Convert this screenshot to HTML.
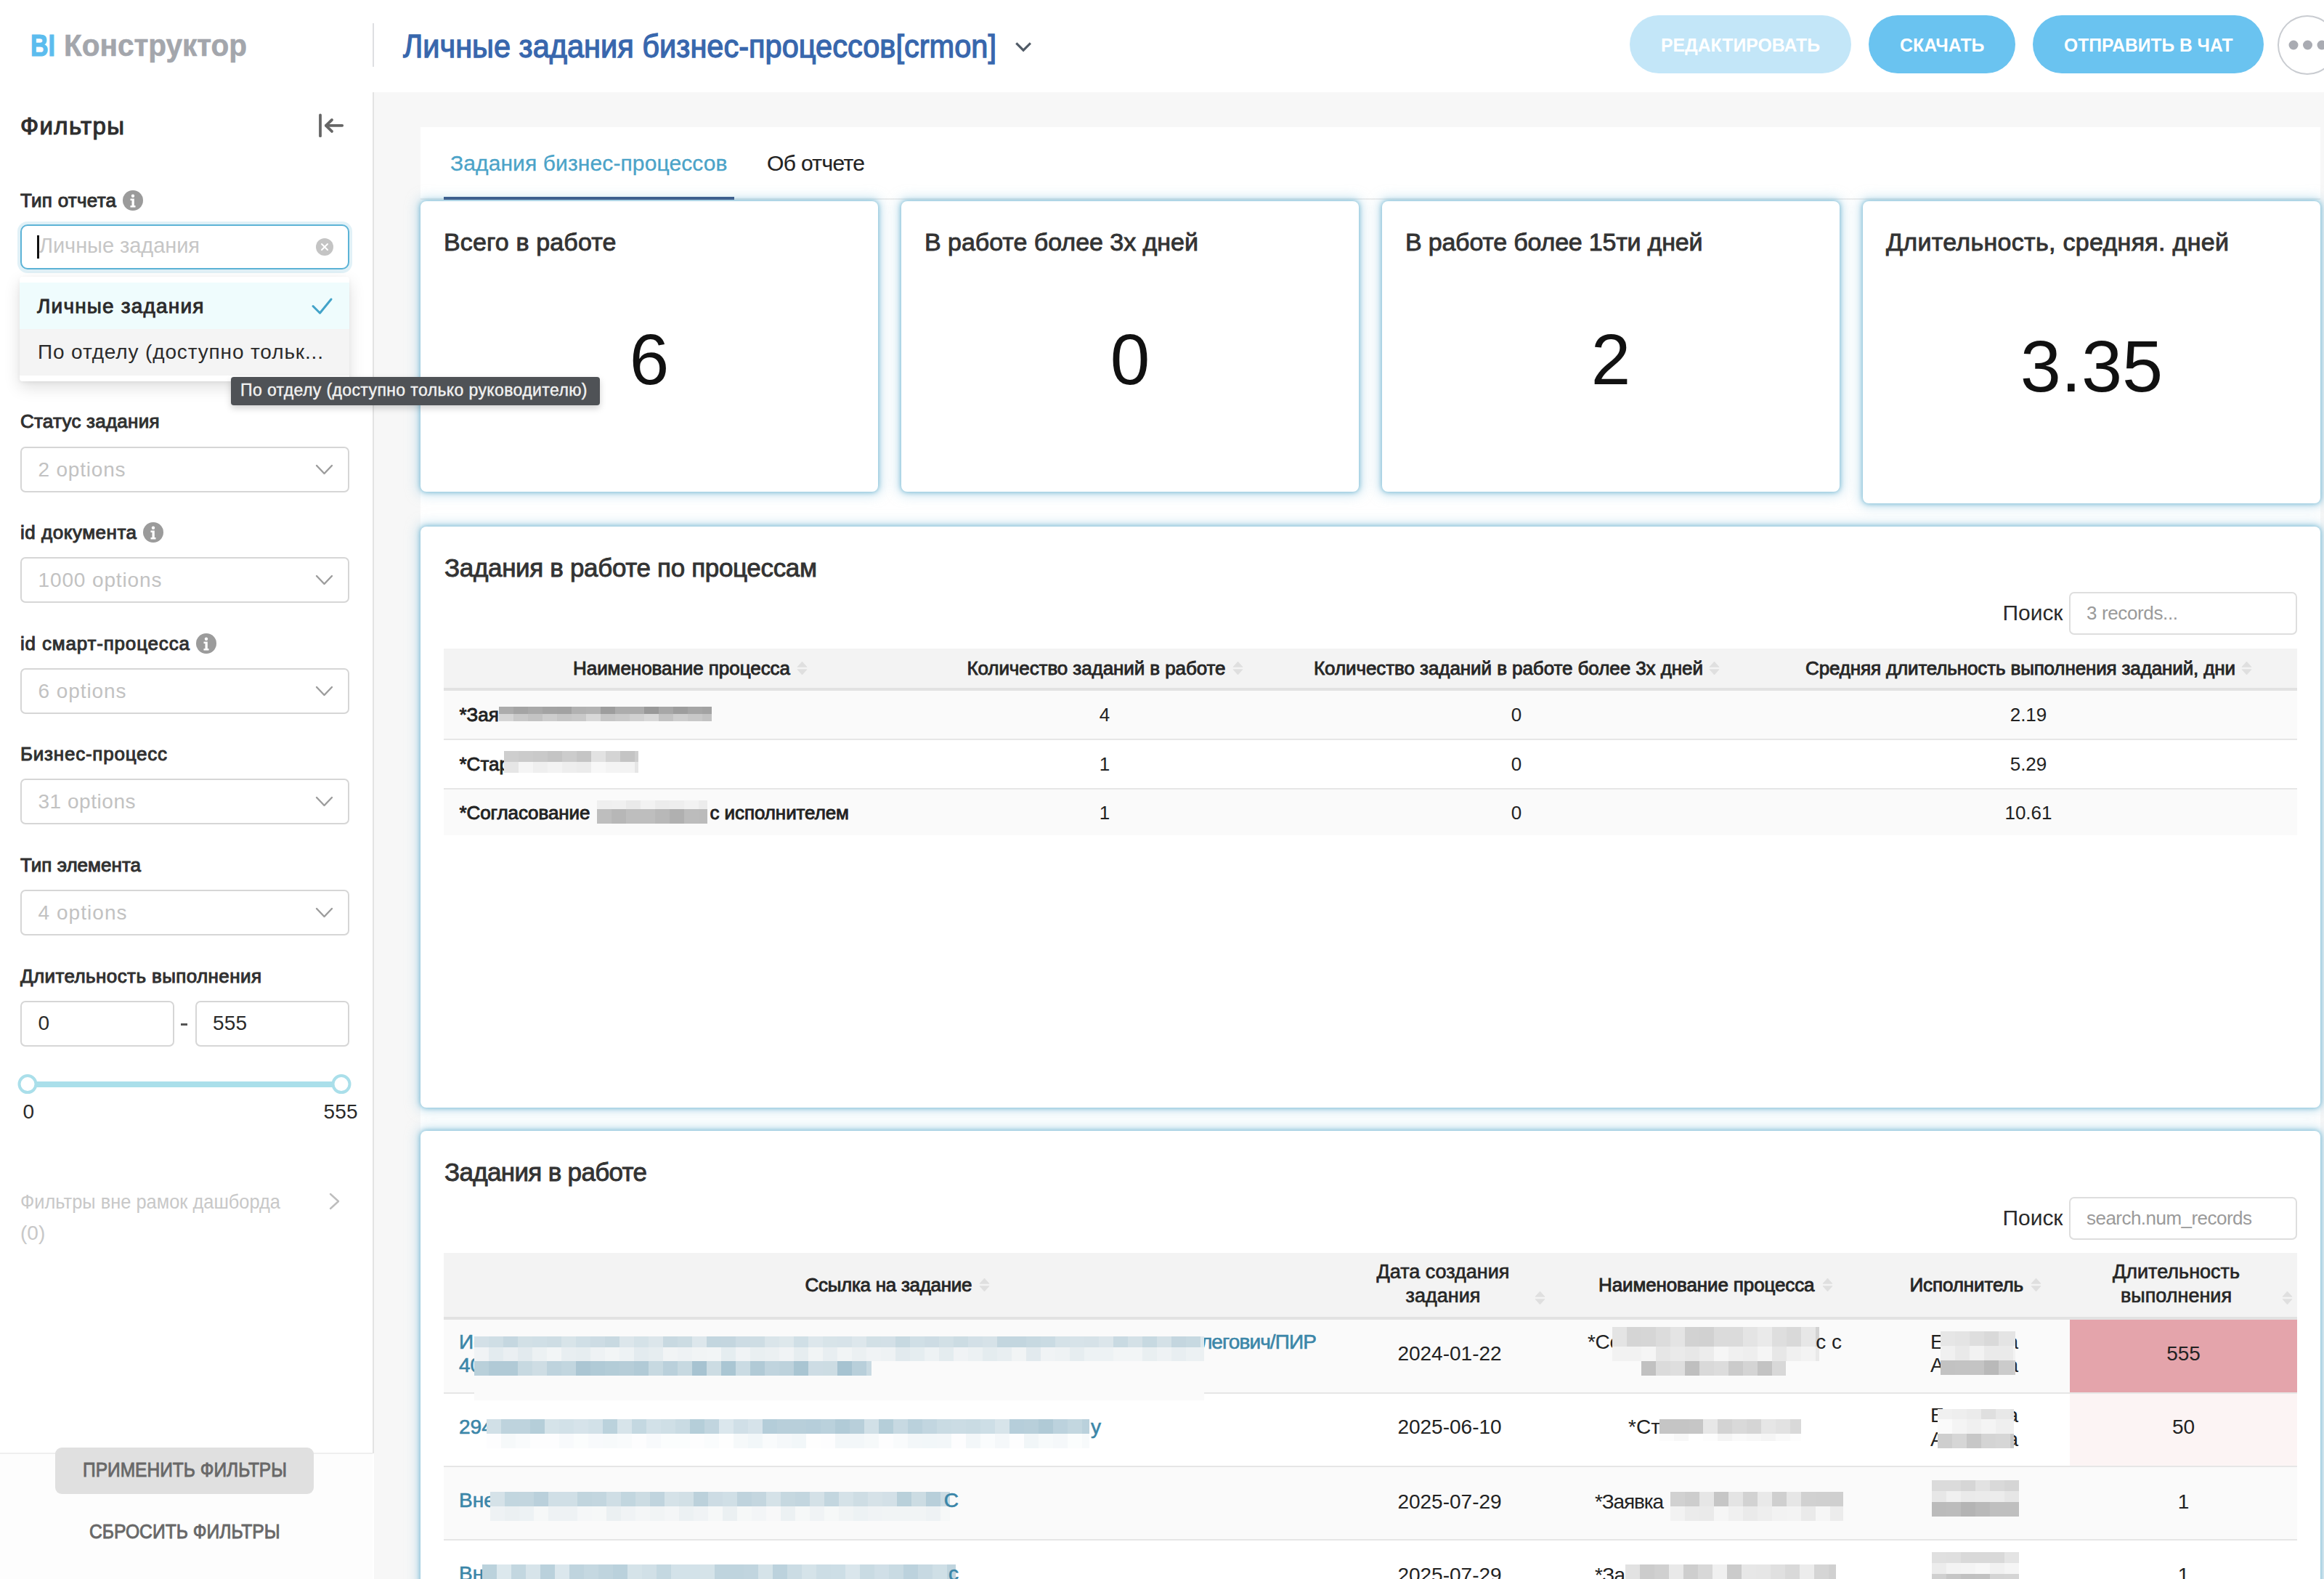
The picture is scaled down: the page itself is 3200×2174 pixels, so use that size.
<!DOCTYPE html>
<html><head><meta charset="utf-8"><style>
html,body{margin:0;padding:0;}
body{width:3200px;height:2174px;overflow:hidden;position:relative;background:#fff;font-family:'Liberation Sans', sans-serif;}
@media (max-width: 2000px) { html { zoom: 0.5; } }
.card{position:absolute;background:#fff;border-radius:8px;box-shadow:0 0 6px 1px rgba(120,185,212,0.9),0 0 16px 5px rgba(165,210,230,0.55);}
</style></head><body>
<div style="position:absolute;left:515px;top:127px;width:2685px;height:2047px;background:#f7f7f7;"></div>
<div style="position:absolute;left:579px;top:175px;width:2616px;height:1999px;background:#ffffff;"></div>
<div style="position:absolute;left:0px;top:127px;width:513px;height:1874px;background:#ffffff;"></div>
<div style="position:absolute;left:0px;top:2001px;width:513px;height:173px;background:#fdfdfd;"></div>
<div style="position:absolute;left:0px;top:2000px;width:513px;height:2px;background:#efefef;"></div>
<div style="position:absolute;left:513px;top:127px;width:2px;height:1874px;background:#e3e3e3;"></div>
<div style="position:absolute;top:42px;font-size:42px;line-height:42px;font-weight:700;color:#5cbcee;white-space:nowrap;transform:scaleX(0.8095);transform-origin:0 0;left:42px;-webkit-text-stroke:1.2px #5cbcee;"><span id="t1">BI</span></div>
<div style="position:absolute;top:42px;font-size:42px;line-height:42px;font-weight:700;color:#a3a6ac;white-space:nowrap;transform:scaleX(0.9640);transform-origin:0 0;left:88px;-webkit-text-stroke:0.6px #a3a6ac;"><span id="t2">Конструктор</span></div>
<div style="position:absolute;left:513px;top:32px;width:2px;height:60px;background:#dedfe2;"></div>
<div style="position:absolute;top:42px;font-size:44px;line-height:44px;font-weight:400;-webkit-text-stroke:1.3px #3867ad;color:#3867ad;white-space:nowrap;transform:scaleX(0.9444);transform-origin:0 0;left:555px;"><span id="t3">Личные задания бизнес-процессов[crmon]</span></div>
<svg style="position:absolute;left:1395px;top:54px" width="28" height="22" viewBox="0 0 28 22"><polyline points="4.3,5.4 14.1,15.2 23.9,5.4" fill="none" stroke="#505a66" stroke-width="3.1" stroke-linecap="butt" stroke-linejoin="miter"/></svg>
<div style="position:absolute;left:2243.5px;top:21px;width:305.0px;height:80px;background:#c3e6f8;border-radius:40px;"></div>
<div style="position:absolute;top:49.5px;font-size:25px;line-height:25px;font-weight:700;color:#ffffff;white-space:nowrap;transform:scaleX(0.9910);transform-origin:0 0;left:2287px;"><span id="t4">РЕДАКТИРОВАТЬ</span></div>
<div style="position:absolute;left:2573px;top:21px;width:202px;height:80px;background:#6ac3f0;border-radius:40px;"></div>
<div style="position:absolute;top:49.5px;font-size:25px;line-height:25px;font-weight:700;color:#ffffff;white-space:nowrap;transform:scaleX(0.9951);transform-origin:0 0;left:2615.5px;"><span id="t5">СКАЧАТЬ</span></div>
<div style="position:absolute;left:2799px;top:21px;width:318px;height:80px;background:#6ac3f0;border-radius:40px;"></div>
<div style="position:absolute;top:49.5px;font-size:25px;line-height:25px;font-weight:700;color:#ffffff;white-space:nowrap;transform:scaleX(0.9848);transform-origin:0 0;left:2841.5px;"><span id="t6">ОТПРАВИТЬ В ЧАТ</span></div>
<div style="position:absolute;left:3136.3px;top:21px;width:82.0px;height:81.5px;background:#fff;box-sizing:border-box;border:2px solid #c9ccd1;border-radius:50%;"></div>
<svg style="position:absolute;left:3145px;top:52px" width="55" height="20" viewBox="0 0 55 20"><circle cx="13" cy="10" r="6.5" fill="#a9abb2"/><circle cx="32.5" cy="10" r="6.5" fill="#a9abb2"/><circle cx="52" cy="10" r="6.5" fill="#a9abb2"/></svg>
<div style="position:absolute;top:157px;font-size:33px;line-height:33px;font-weight:400;-webkit-text-stroke:1.1px #2e2e2e;color:#2e2e2e;white-space:nowrap;letter-spacing:1.404px;left:28px;"><span id="t7">Фильтры</span></div>
<svg style="position:absolute;left:432px;top:150px" width="48" height="46" viewBox="0 0 48 46"><line x1="9" y1="8.4" x2="9" y2="37.2" stroke="#666" stroke-width="3.8" stroke-linecap="round"/><line x1="17" y1="22.8" x2="39.2" y2="22.8" stroke="#666" stroke-width="3.8" stroke-linecap="round"/><polyline points="25,15 16.8,22.8 25,30.9" fill="none" stroke="#666" stroke-width="3.8" stroke-linecap="round" stroke-linejoin="round"/></svg>
<div style="position:absolute;top:262.5px;font-size:26px;line-height:26px;font-weight:400;-webkit-text-stroke:1.0px #303030;color:#303030;white-space:nowrap;letter-spacing:0.267px;left:28px;"><span id="t8">Тип отчета</span></div>
<svg style="position:absolute;left:169px;top:261.5px" width="28" height="28" viewBox="0 0 28 28"><circle cx="14" cy="14" r="14" fill="#9b9b9b"/><circle cx="14" cy="7.7" r="2.2" fill="#fff"/><path d="M10.5 11.5 H15.8 V21 H17.5 V23.5 H10.5 V21 H12.5 V14 H10.5 Z" fill="#fff"/></svg>
<div style="position:absolute;left:23.5px;top:304.5px;width:461.0px;height:71.0px;background:rgba(120,190,220,0.22);border-radius:14px;"></div>
<div style="position:absolute;left:27.5px;top:309px;width:453.0px;height:62px;background:#fff;box-sizing:border-box;border:2.5px solid #5cb3d6;border-radius:10px;"></div>
<div style="position:absolute;left:51px;top:324px;width:2.5px;height:32px;background:#111;"></div>
<div style="position:absolute;top:324px;font-size:29px;line-height:29px;font-weight:400;color:#c6c6c6;white-space:nowrap;letter-spacing:-0.060px;left:54px;"><span id="t9">Личные задания</span></div>
<svg style="position:absolute;left:435px;top:328px" width="24" height="24" viewBox="0 0 24 24"><circle cx="12" cy="12" r="12" fill="#c4c4c4"/><path d="M8 8 L16 16 M16 8 L8 16" stroke="#fff" stroke-width="2" stroke-linecap="round"/></svg>
<div style="position:absolute;top:567px;font-size:26px;line-height:26px;font-weight:400;-webkit-text-stroke:1.0px #303030;color:#303030;white-space:nowrap;letter-spacing:0.239px;left:28px;"><span id="t10">Статус задания</span></div>
<div style="position:absolute;left:27.5px;top:614.5px;width:453.0px;height:63.0px;background:#fff;box-sizing:border-box;border:2px solid #d6d6d6;border-radius:7px;"></div>
<div style="position:absolute;top:632.5px;font-size:28px;line-height:28px;font-weight:400;color:#c2c2c2;white-space:nowrap;letter-spacing:0.795px;left:52.5px;"><span id="t11">2 options</span></div>
<svg style="position:absolute;left:430px;top:636.5px" width="34" height="20" viewBox="0 0 34 20"><polyline points="6,4 16.5,15 27,4" fill="none" stroke="#9c9c9c" stroke-width="2.4" stroke-linecap="round" stroke-linejoin="round"/></svg>
<div style="position:absolute;top:720px;font-size:26px;line-height:26px;font-weight:400;-webkit-text-stroke:1.0px #303030;color:#303030;white-space:nowrap;letter-spacing:0.523px;left:28px;"><span id="t12">id документа</span></div>
<svg style="position:absolute;left:197px;top:718.5px" width="28" height="28" viewBox="0 0 28 28"><circle cx="14" cy="14" r="14" fill="#9b9b9b"/><circle cx="14" cy="7.7" r="2.2" fill="#fff"/><path d="M10.5 11.5 H15.8 V21 H17.5 V23.5 H10.5 V21 H12.5 V14 H10.5 Z" fill="#fff"/></svg>
<div style="position:absolute;left:27.5px;top:767px;width:453.0px;height:63px;background:#fff;box-sizing:border-box;border:2px solid #d6d6d6;border-radius:7px;"></div>
<div style="position:absolute;top:785px;font-size:28px;line-height:28px;font-weight:400;color:#c2c2c2;white-space:nowrap;letter-spacing:0.876px;left:52.5px;"><span id="t13">1000 options</span></div>
<svg style="position:absolute;left:430px;top:789px" width="34" height="20" viewBox="0 0 34 20"><polyline points="6,4 16.5,15 27,4" fill="none" stroke="#9c9c9c" stroke-width="2.4" stroke-linecap="round" stroke-linejoin="round"/></svg>
<div style="position:absolute;top:872.5px;font-size:26px;line-height:26px;font-weight:400;-webkit-text-stroke:1.0px #303030;color:#303030;white-space:nowrap;letter-spacing:0.826px;left:28px;"><span id="t14">id смарт-процесса</span></div>
<svg style="position:absolute;left:269.5px;top:871.5px" width="28" height="28" viewBox="0 0 28 28"><circle cx="14" cy="14" r="14" fill="#9b9b9b"/><circle cx="14" cy="7.7" r="2.2" fill="#fff"/><path d="M10.5 11.5 H15.8 V21 H17.5 V23.5 H10.5 V21 H12.5 V14 H10.5 Z" fill="#fff"/></svg>
<div style="position:absolute;left:27.5px;top:919.5px;width:453.0px;height:63.0px;background:#fff;box-sizing:border-box;border:2px solid #d6d6d6;border-radius:7px;"></div>
<div style="position:absolute;top:937.5px;font-size:28px;line-height:28px;font-weight:400;color:#c2c2c2;white-space:nowrap;letter-spacing:0.920px;left:52.5px;"><span id="t15">6 options</span></div>
<svg style="position:absolute;left:430px;top:941.5px" width="34" height="20" viewBox="0 0 34 20"><polyline points="6,4 16.5,15 27,4" fill="none" stroke="#9c9c9c" stroke-width="2.4" stroke-linecap="round" stroke-linejoin="round"/></svg>
<div style="position:absolute;top:1025px;font-size:26px;line-height:26px;font-weight:400;-webkit-text-stroke:1.0px #303030;color:#303030;white-space:nowrap;letter-spacing:0.766px;left:28px;"><span id="t16">Бизнес-процесс</span></div>
<div style="position:absolute;left:27.5px;top:1072px;width:453.0px;height:63px;background:#fff;box-sizing:border-box;border:2px solid #d6d6d6;border-radius:7px;"></div>
<div style="position:absolute;top:1090px;font-size:28px;line-height:28px;font-weight:400;color:#c2c2c2;white-space:nowrap;letter-spacing:0.531px;left:52.5px;"><span id="t17">31 options</span></div>
<svg style="position:absolute;left:430px;top:1094px" width="34" height="20" viewBox="0 0 34 20"><polyline points="6,4 16.5,15 27,4" fill="none" stroke="#9c9c9c" stroke-width="2.4" stroke-linecap="round" stroke-linejoin="round"/></svg>
<div style="position:absolute;top:1177.5px;font-size:26px;line-height:26px;font-weight:400;-webkit-text-stroke:1.0px #303030;color:#303030;white-space:nowrap;letter-spacing:0.030px;left:28px;"><span id="t18">Тип элемента</span></div>
<div style="position:absolute;left:27.5px;top:1224.5px;width:453.0px;height:63.0px;background:#fff;box-sizing:border-box;border:2px solid #d6d6d6;border-radius:7px;"></div>
<div style="position:absolute;top:1242.5px;font-size:28px;line-height:28px;font-weight:400;color:#c2c2c2;white-space:nowrap;letter-spacing:1.045px;left:52.5px;"><span id="t19">4 options</span></div>
<svg style="position:absolute;left:430px;top:1246.5px" width="34" height="20" viewBox="0 0 34 20"><polyline points="6,4 16.5,15 27,4" fill="none" stroke="#9c9c9c" stroke-width="2.4" stroke-linecap="round" stroke-linejoin="round"/></svg>
<div style="position:absolute;top:1330.5px;font-size:26px;line-height:26px;font-weight:400;-webkit-text-stroke:1.0px #303030;color:#303030;white-space:nowrap;letter-spacing:0.402px;left:28px;"><span id="t20">Длительность выполнения</span></div>
<div style="position:absolute;left:27.5px;top:1377.5px;width:212.0px;height:63.0px;background:#fff;box-sizing:border-box;border:2px solid #d6d6d6;border-radius:7px;"></div>
<div style="position:absolute;left:268.5px;top:1377.5px;width:212.0px;height:63.0px;background:#fff;box-sizing:border-box;border:2px solid #d6d6d6;border-radius:7px;"></div>
<div style="position:absolute;top:1395px;font-size:28px;line-height:28px;font-weight:400;color:#2a2a2a;white-space:nowrap;left:52.5px;"><span id="t21">0</span></div>
<div style="position:absolute;top:1395px;font-size:28px;line-height:28px;font-weight:400;color:#2a2a2a;white-space:nowrap;letter-spacing:0.141px;left:293px;"><span id="t22">555</span></div>
<div style="position:absolute;left:249px;top:1409px;width:9px;height:2.5px;background:#555;"></div>
<div style="position:absolute;left:37.6px;top:1488.6px;width:431.4px;height:8.0px;background:#aadfea;"></div>
<svg style="position:absolute;left:23px;top:1478px" width="30" height="30" viewBox="0 0 30 30"><circle cx="15" cy="14.6" r="11.5" fill="#fff" stroke="#aadfea" stroke-width="4"/></svg>
<svg style="position:absolute;left:454.5px;top:1478px" width="30" height="30" viewBox="0 0 30 30"><circle cx="15" cy="14.6" r="11.5" fill="#fff" stroke="#aadfea" stroke-width="4"/></svg>
<div style="position:absolute;top:1516.5px;font-size:28px;line-height:28px;font-weight:400;color:#2a2a2a;white-space:nowrap;left:31.5px;"><span id="t23">0</span></div>
<div style="position:absolute;top:1516.5px;font-size:28px;line-height:28px;font-weight:400;color:#2a2a2a;white-space:nowrap;letter-spacing:0.141px;left:445.5px;"><span id="t24">555</span></div>
<div style="position:absolute;top:1641px;font-size:28px;line-height:28px;font-weight:400;color:#c8c8c8;white-space:nowrap;transform:scaleX(0.9075);transform-origin:0 0;left:28px;"><span id="t25">Фильтры вне рамок дашборда</span></div>
<svg style="position:absolute;left:448px;top:1640px" width="26" height="30" viewBox="0 0 26 30"><polyline points="7,4 18,14 7,24" fill="none" stroke="#bdbdbd" stroke-width="2.4" stroke-linecap="round" stroke-linejoin="round"/></svg>
<div style="position:absolute;top:1684px;font-size:28px;line-height:28px;font-weight:400;color:#c8c8c8;white-space:nowrap;left:28px;"><span id="t26">(0)</span></div>
<div style="position:absolute;left:76px;top:1993px;width:356px;height:64px;background:#e0e0e0;border-radius:9px;"></div>
<div style="position:absolute;top:2011px;font-size:27px;line-height:27px;font-weight:400;-webkit-text-stroke:0.9px #686868;color:#686868;white-space:nowrap;transform:scaleX(0.9093);transform-origin:0 0;left:114px;"><span id="t27">ПРИМЕНИТЬ ФИЛЬТРЫ</span></div>
<div style="position:absolute;top:2096px;font-size:27px;line-height:27px;font-weight:400;-webkit-text-stroke:0.9px #686868;color:#686868;white-space:nowrap;transform:scaleX(0.9136);transform-origin:0 0;left:122.5px;"><span id="t28">СБРОСИТЬ ФИЛЬТРЫ</span></div>
<div style="position:absolute;top:210px;font-size:30px;line-height:30px;font-weight:400;-webkit-text-stroke:0.3px #4ba3c8;color:#4ba3c8;white-space:nowrap;letter-spacing:0.111px;left:620px;"><span id="t29">Задания бизнес-процессов</span></div>
<div style="position:absolute;top:210px;font-size:30px;line-height:30px;font-weight:400;-webkit-text-stroke:0.2px #222;color:#222;white-space:nowrap;letter-spacing:-0.629px;left:1056px;"><span id="t30">Об отчете</span></div>
<div style="position:absolute;left:579px;top:273px;width:2616px;height:2px;background:#ececec;"></div>
<div class="card" style="left:579px;top:276.5px;width:630px;height:400.5px"></div>
<div style="position:absolute;top:316px;font-size:34px;line-height:34px;font-weight:400;-webkit-text-stroke:0.9px #333;color:#333;white-space:nowrap;letter-spacing:0.141px;left:611px;"><span id="t31">Всего в работе</span></div>
<div class="card" style="left:1241px;top:276.5px;width:630px;height:400.5px"></div>
<div style="position:absolute;top:316px;font-size:34px;line-height:34px;font-weight:400;-webkit-text-stroke:0.9px #333;color:#333;white-space:nowrap;letter-spacing:-0.036px;left:1273px;"><span id="t32">В работе более 3х дней</span></div>
<div class="card" style="left:1903px;top:276.5px;width:630px;height:400.5px"></div>
<div style="position:absolute;top:316px;font-size:34px;line-height:34px;font-weight:400;-webkit-text-stroke:0.9px #333;color:#333;white-space:nowrap;letter-spacing:-0.205px;left:1935px;"><span id="t33">В работе более 15ти дней</span></div>
<div class="card" style="left:2565px;top:276.5px;width:630px;height:416.5px"></div>
<div style="position:absolute;top:316px;font-size:34px;line-height:34px;font-weight:400;-webkit-text-stroke:0.9px #333;color:#333;white-space:nowrap;letter-spacing:0.301px;left:2597px;"><span id="t34">Длительность, средняя. дней</span></div>
<div style="position:absolute;top:446px;font-size:98px;line-height:98px;font-weight:400;color:#111;white-space:nowrap;left:-606px;width:3000px;text-align:center;"><span id="t35">6</span></div>
<div style="position:absolute;top:446px;font-size:98px;line-height:98px;font-weight:400;color:#111;white-space:nowrap;left:56px;width:3000px;text-align:center;"><span id="t36">0</span></div>
<div style="position:absolute;top:446px;font-size:98px;line-height:98px;font-weight:400;color:#111;white-space:nowrap;left:718px;width:3000px;text-align:center;"><span id="t37">2</span></div>
<div style="position:absolute;top:454px;font-size:101px;line-height:101px;font-weight:400;color:#111;white-space:nowrap;left:1380px;width:3000px;text-align:center;"><span id="t38">3.35</span></div>
<div class="card" style="left:579px;top:725px;width:2616px;height:800px"></div>
<div style="position:absolute;top:764px;font-size:35px;line-height:35px;font-weight:400;-webkit-text-stroke:0.9px #333;color:#333;white-space:nowrap;letter-spacing:-0.341px;left:612px;"><span id="t39">Задания в работе по процессам</span></div>
<div style="position:absolute;top:829px;font-size:30px;line-height:30px;font-weight:400;color:#2a2a2a;white-space:nowrap;letter-spacing:-0.035px;left:2757.5px;"><span id="t40">Поиск</span></div>
<div style="position:absolute;left:2849px;top:815px;width:314px;height:59px;background:#fff;box-sizing:border-box;border:2px solid #dedede;border-radius:7px;"></div>
<div style="position:absolute;top:831px;font-size:26px;line-height:26px;font-weight:400;color:#9a9a9a;white-space:nowrap;letter-spacing:-0.369px;left:2873px;"><span id="t41">3 records...</span></div>
<div style="position:absolute;left:611px;top:893px;width:2552px;height:54px;background:#f3f3f3;"></div>
<div style="position:absolute;left:611px;top:947px;width:2552px;height:4px;background:#e2e2e2;"></div>
<div style="position:absolute;top:907px;font-size:26px;line-height:26px;font-weight:400;-webkit-text-stroke:0.9px #262626;color:#262626;white-space:nowrap;letter-spacing:-0.049px;left:789px;"><span id="t42">Наименование процесса</span></div>
<svg style="position:absolute;left:1097.0px;top:909.5px" width="15" height="22" viewBox="0 0 15 22"><path d="M1 8.3 L7.5 1 L14 8.3 Z M1 11.7 L7.5 19 L14 11.7 Z" fill="#dfdfdf" stroke="#dfdfdf" stroke-width="0.8" stroke-linejoin="round"/></svg>
<div style="position:absolute;top:907px;font-size:26px;line-height:26px;font-weight:400;-webkit-text-stroke:0.9px #262626;color:#262626;white-space:nowrap;letter-spacing:-0.089px;left:1331.5px;"><span id="t43">Количество заданий в работе</span></div>
<svg style="position:absolute;left:1697.0px;top:909.5px" width="15" height="22" viewBox="0 0 15 22"><path d="M1 8.3 L7.5 1 L14 8.3 Z M1 11.7 L7.5 19 L14 11.7 Z" fill="#dfdfdf" stroke="#dfdfdf" stroke-width="0.8" stroke-linejoin="round"/></svg>
<div style="position:absolute;top:907px;font-size:26px;line-height:26px;font-weight:400;-webkit-text-stroke:0.9px #262626;color:#262626;white-space:nowrap;letter-spacing:-0.071px;left:1809px;"><span id="t44">Количество заданий в работе более 3х дней</span></div>
<svg style="position:absolute;left:2353.0px;top:909.5px" width="15" height="22" viewBox="0 0 15 22"><path d="M1 8.3 L7.5 1 L14 8.3 Z M1 11.7 L7.5 19 L14 11.7 Z" fill="#dfdfdf" stroke="#dfdfdf" stroke-width="0.8" stroke-linejoin="round"/></svg>
<div style="position:absolute;top:907px;font-size:26px;line-height:26px;font-weight:400;-webkit-text-stroke:0.9px #262626;color:#262626;white-space:nowrap;letter-spacing:-0.137px;left:2486px;"><span id="t45">Средняя длительность выполнения заданий, дни</span></div>
<svg style="position:absolute;left:3086.0px;top:909.5px" width="15" height="22" viewBox="0 0 15 22"><path d="M1 8.3 L7.5 1 L14 8.3 Z M1 11.7 L7.5 19 L14 11.7 Z" fill="#dfdfdf" stroke="#dfdfdf" stroke-width="0.8" stroke-linejoin="round"/></svg>
<div style="position:absolute;left:611px;top:951px;width:2552px;height:66px;background:#fafafa;"></div>
<div style="position:absolute;left:611px;top:1017px;width:2552px;height:2px;background:#e6e6e6;"></div>
<div style="position:absolute;left:611px;top:1019px;width:2552px;height:66px;background:#ffffff;"></div>
<div style="position:absolute;left:611px;top:1085px;width:2552px;height:2px;background:#e6e6e6;"></div>
<div style="position:absolute;left:611px;top:1087px;width:2552px;height:63px;background:#fafafa;"></div>
<div style="position:absolute;top:970.5px;font-size:26px;line-height:26px;font-weight:400;-webkit-text-stroke:0.9px #222;color:#222;white-space:nowrap;left:632.5px;"><span id="t46">*Зая</span></div>
<svg style="position:absolute;left:687px;top:973px" width="293" height="20" viewBox="0 0 293 20"><rect x="0" y="0" width="293" height="20" fill="#fafafa"/><rect x="0" y="0" width="20" height="10" fill="rgb(120, 120, 120)" fill-opacity="0.60"/><rect x="20" y="0" width="20" height="10" fill="rgb(120, 120, 120)" fill-opacity="0.66"/><rect x="40" y="0" width="20" height="10" fill="rgb(120, 120, 120)" fill-opacity="0.62"/><rect x="60" y="0" width="20" height="10" fill="rgb(120, 120, 120)" fill-opacity="0.67"/><rect x="80" y="0" width="20" height="10" fill="rgb(120, 120, 120)" fill-opacity="0.68"/><rect x="100" y="0" width="20" height="10" fill="rgb(120, 120, 120)" fill-opacity="0.56"/><rect x="120" y="0" width="20" height="10" fill="rgb(120, 120, 120)" fill-opacity="0.55"/><rect x="140" y="0" width="20" height="10" fill="rgb(120, 120, 120)" fill-opacity="0.72"/><rect x="160" y="0" width="20" height="10" fill="rgb(120, 120, 120)" fill-opacity="0.60"/><rect x="180" y="0" width="20" height="10" fill="rgb(120, 120, 120)" fill-opacity="0.60"/><rect x="200" y="0" width="20" height="10" fill="rgb(120, 120, 120)" fill-opacity="0.75"/><rect x="220" y="0" width="20" height="10" fill="rgb(120, 120, 120)" fill-opacity="0.64"/><rect x="240" y="0" width="20" height="10" fill="rgb(120, 120, 120)" fill-opacity="0.72"/><rect x="260" y="0" width="20" height="10" fill="rgb(120, 120, 120)" fill-opacity="0.65"/><rect x="280" y="0" width="13" height="10" fill="rgb(120, 120, 120)" fill-opacity="0.68"/><rect x="0" y="10" width="20" height="10" fill="rgb(120, 120, 120)" fill-opacity="0.28"/><rect x="20" y="10" width="20" height="10" fill="rgb(120, 120, 120)" fill-opacity="0.38"/><rect x="40" y="10" width="20" height="10" fill="rgb(120, 120, 120)" fill-opacity="0.42"/><rect x="60" y="10" width="20" height="10" fill="rgb(120, 120, 120)" fill-opacity="0.35"/><rect x="80" y="10" width="20" height="10" fill="rgb(120, 120, 120)" fill-opacity="0.40"/><rect x="100" y="10" width="20" height="10" fill="rgb(120, 120, 120)" fill-opacity="0.38"/><rect x="120" y="10" width="20" height="10" fill="rgb(120, 120, 120)" fill-opacity="0.26"/><rect x="140" y="10" width="20" height="10" fill="rgb(120, 120, 120)" fill-opacity="0.40"/><rect x="160" y="10" width="20" height="10" fill="rgb(120, 120, 120)" fill-opacity="0.37"/><rect x="180" y="10" width="20" height="10" fill="rgb(120, 120, 120)" fill-opacity="0.31"/><rect x="200" y="10" width="20" height="10" fill="rgb(120, 120, 120)" fill-opacity="0.26"/><rect x="220" y="10" width="20" height="10" fill="rgb(120, 120, 120)" fill-opacity="0.42"/><rect x="240" y="10" width="20" height="10" fill="rgb(120, 120, 120)" fill-opacity="0.34"/><rect x="260" y="10" width="20" height="10" fill="rgb(120, 120, 120)" fill-opacity="0.39"/><rect x="280" y="10" width="13" height="10" fill="rgb(120, 120, 120)" fill-opacity="0.43"/></svg>
<div style="position:absolute;top:1039px;font-size:26px;line-height:26px;font-weight:400;-webkit-text-stroke:0.9px #222;color:#222;white-space:nowrap;left:632.5px;"><span id="t47">*Стар</span></div>
<svg style="position:absolute;left:694px;top:1034px" width="185" height="30" viewBox="0 0 185 30"><rect x="0" y="0" width="185" height="30" fill="#ffffff"/><rect x="0" y="0" width="20" height="15" fill="rgb(120, 120, 120)" fill-opacity="0.36"/><rect x="20" y="0" width="20" height="15" fill="rgb(120, 120, 120)" fill-opacity="0.39"/><rect x="40" y="0" width="20" height="15" fill="rgb(120, 120, 120)" fill-opacity="0.40"/><rect x="60" y="0" width="20" height="15" fill="rgb(120, 120, 120)" fill-opacity="0.44"/><rect x="80" y="0" width="20" height="15" fill="rgb(120, 120, 120)" fill-opacity="0.38"/><rect x="100" y="0" width="20" height="15" fill="rgb(120, 120, 120)" fill-opacity="0.43"/><rect x="120" y="0" width="20" height="15" fill="rgb(120, 120, 120)" fill-opacity="0.21"/><rect x="140" y="0" width="20" height="15" fill="rgb(120, 120, 120)" fill-opacity="0.32"/><rect x="160" y="0" width="20" height="15" fill="rgb(120, 120, 120)" fill-opacity="0.44"/><rect x="180" y="0" width="5" height="15" fill="rgb(120, 120, 120)" fill-opacity="0.36"/><rect x="0" y="15" width="20" height="15" fill="rgb(120, 120, 120)" fill-opacity="0.19"/><rect x="20" y="15" width="20" height="15" fill="rgb(120, 120, 120)" fill-opacity="0.07"/><rect x="40" y="15" width="20" height="15" fill="rgb(120, 120, 120)" fill-opacity="0.12"/><rect x="60" y="15" width="20" height="15" fill="rgb(120, 120, 120)" fill-opacity="0.09"/><rect x="80" y="15" width="20" height="15" fill="rgb(120, 120, 120)" fill-opacity="0.13"/><rect x="100" y="15" width="20" height="15" fill="rgb(120, 120, 120)" fill-opacity="0.14"/><rect x="120" y="15" width="20" height="15" fill="rgb(120, 120, 120)" fill-opacity="0.05"/><rect x="140" y="15" width="20" height="15" fill="rgb(120, 120, 120)" fill-opacity="0.08"/><rect x="160" y="15" width="20" height="15" fill="rgb(120, 120, 120)" fill-opacity="0.09"/><rect x="180" y="15" width="5" height="15" fill="rgb(120, 120, 120)" fill-opacity="0.19"/></svg>
<div style="position:absolute;top:1105.5px;font-size:26px;line-height:26px;font-weight:400;-webkit-text-stroke:0.9px #222;color:#222;white-space:nowrap;letter-spacing:-0.082px;left:632.5px;"><span id="t48">*Согласование</span></div>
<svg style="position:absolute;left:822px;top:1102px" width="152" height="32" viewBox="0 0 152 32"><rect x="0" y="0" width="152" height="32" fill="#fafafa"/><rect x="0" y="0" width="20" height="12" fill="rgb(120, 120, 120)" fill-opacity="0.08"/><rect x="20" y="0" width="20" height="12" fill="rgb(120, 120, 120)" fill-opacity="0.07"/><rect x="40" y="0" width="20" height="12" fill="rgb(120, 120, 120)" fill-opacity="0.12"/><rect x="60" y="0" width="20" height="12" fill="rgb(120, 120, 120)" fill-opacity="0.06"/><rect x="80" y="0" width="20" height="12" fill="rgb(120, 120, 120)" fill-opacity="0.10"/><rect x="100" y="0" width="20" height="12" fill="rgb(120, 120, 120)" fill-opacity="0.09"/><rect x="120" y="0" width="20" height="12" fill="rgb(120, 120, 120)" fill-opacity="0.06"/><rect x="140" y="0" width="12" height="12" fill="rgb(120, 120, 120)" fill-opacity="0.10"/><rect x="0" y="12" width="20" height="20" fill="rgb(120, 120, 120)" fill-opacity="0.46"/><rect x="20" y="12" width="20" height="20" fill="rgb(120, 120, 120)" fill-opacity="0.52"/><rect x="40" y="12" width="20" height="20" fill="rgb(120, 120, 120)" fill-opacity="0.46"/><rect x="60" y="12" width="20" height="20" fill="rgb(120, 120, 120)" fill-opacity="0.46"/><rect x="80" y="12" width="20" height="20" fill="rgb(120, 120, 120)" fill-opacity="0.51"/><rect x="100" y="12" width="20" height="20" fill="rgb(120, 120, 120)" fill-opacity="0.57"/><rect x="120" y="12" width="20" height="20" fill="rgb(120, 120, 120)" fill-opacity="0.47"/><rect x="140" y="12" width="12" height="20" fill="rgb(120, 120, 120)" fill-opacity="0.48"/></svg>
<div style="position:absolute;top:1105.5px;font-size:26px;line-height:26px;font-weight:400;-webkit-text-stroke:0.9px #222;color:#222;white-space:nowrap;letter-spacing:-0.077px;left:977.5px;"><span id="t49">с исполнителем</span></div>
<div style="position:absolute;top:970.5px;font-size:26px;line-height:26px;font-weight:400;color:#222;white-space:nowrap;left:21px;width:3000px;text-align:center;"><span id="t50">4</span></div>
<div style="position:absolute;top:970.5px;font-size:26px;line-height:26px;font-weight:400;color:#222;white-space:nowrap;left:588px;width:3000px;text-align:center;"><span id="t51">0</span></div>
<div style="position:absolute;top:970.5px;font-size:26px;line-height:26px;font-weight:400;color:#222;white-space:nowrap;left:1293px;width:3000px;text-align:center;"><span id="t52">2.19</span></div>
<div style="position:absolute;top:1039px;font-size:26px;line-height:26px;font-weight:400;color:#222;white-space:nowrap;left:21px;width:3000px;text-align:center;"><span id="t53">1</span></div>
<div style="position:absolute;top:1039px;font-size:26px;line-height:26px;font-weight:400;color:#222;white-space:nowrap;left:588px;width:3000px;text-align:center;"><span id="t54">0</span></div>
<div style="position:absolute;top:1039px;font-size:26px;line-height:26px;font-weight:400;color:#222;white-space:nowrap;left:1293px;width:3000px;text-align:center;"><span id="t55">5.29</span></div>
<div style="position:absolute;top:1105.5px;font-size:26px;line-height:26px;font-weight:400;color:#222;white-space:nowrap;left:21px;width:3000px;text-align:center;"><span id="t56">1</span></div>
<div style="position:absolute;top:1105.5px;font-size:26px;line-height:26px;font-weight:400;color:#222;white-space:nowrap;left:588px;width:3000px;text-align:center;"><span id="t57">0</span></div>
<div style="position:absolute;top:1105.5px;font-size:26px;line-height:26px;font-weight:400;color:#222;white-space:nowrap;left:1293px;width:3000px;text-align:center;"><span id="t58">10.61</span></div>
<div class="card" style="left:579px;top:1557px;width:2616px;height:743px"></div>
<div style="position:absolute;top:1596px;font-size:35px;line-height:35px;font-weight:400;-webkit-text-stroke:0.9px #333;color:#333;white-space:nowrap;letter-spacing:-0.677px;left:612px;"><span id="t59">Задания в работе</span></div>
<div style="position:absolute;top:1661.5px;font-size:30px;line-height:30px;font-weight:400;color:#2a2a2a;white-space:nowrap;letter-spacing:-0.035px;left:2757.5px;"><span id="t60">Поиск</span></div>
<div style="position:absolute;left:2849px;top:1647.5px;width:314px;height:59.0px;background:#fff;box-sizing:border-box;border:2px solid #dedede;border-radius:7px;"></div>
<div style="position:absolute;top:1663.5px;font-size:26px;line-height:26px;font-weight:400;color:#9a9a9a;white-space:nowrap;letter-spacing:-0.529px;left:2873px;"><span id="t61">search.num_records</span></div>
<div style="position:absolute;left:611px;top:1725px;width:2552px;height:87.5px;background:#f3f3f3;"></div>
<div style="position:absolute;left:611px;top:1812.5px;width:2552px;height:4.0px;background:#e2e2e2;"></div>
<div style="position:absolute;top:1755.5px;font-size:26px;line-height:26px;font-weight:400;-webkit-text-stroke:0.9px #262626;color:#262626;white-space:nowrap;letter-spacing:-0.292px;left:1108.5px;"><span id="t62">Ссылка на задание</span></div>
<svg style="position:absolute;left:1347.5px;top:1759px" width="15" height="22" viewBox="0 0 15 22"><path d="M1 8.3 L7.5 1 L14 8.3 Z M1 11.7 L7.5 19 L14 11.7 Z" fill="#dfdfdf" stroke="#dfdfdf" stroke-width="0.8" stroke-linejoin="round"/></svg>
<div style="position:absolute;top:1738px;font-size:27px;line-height:27px;font-weight:400;-webkit-text-stroke:0.7px #262626;color:#262626;white-space:nowrap;left:487px;width:3000px;text-align:center;"><span id="t63">Дата создания</span></div>
<div style="position:absolute;top:1771px;font-size:27px;line-height:27px;font-weight:400;-webkit-text-stroke:0.7px #262626;color:#262626;white-space:nowrap;left:487px;width:3000px;text-align:center;"><span id="t64">задания</span></div>
<svg style="position:absolute;left:2112.5px;top:1776.5px" width="15" height="22" viewBox="0 0 15 22"><path d="M1 8.3 L7.5 1 L14 8.3 Z M1 11.7 L7.5 19 L14 11.7 Z" fill="#dfdfdf" stroke="#dfdfdf" stroke-width="0.8" stroke-linejoin="round"/></svg>
<div style="position:absolute;top:1755.5px;font-size:26px;line-height:26px;font-weight:400;-webkit-text-stroke:0.9px #262626;color:#262626;white-space:nowrap;letter-spacing:-0.124px;left:2201px;"><span id="t65">Наименование процесса</span></div>
<svg style="position:absolute;left:2508.5px;top:1759px" width="15" height="22" viewBox="0 0 15 22"><path d="M1 8.3 L7.5 1 L14 8.3 Z M1 11.7 L7.5 19 L14 11.7 Z" fill="#dfdfdf" stroke="#dfdfdf" stroke-width="0.8" stroke-linejoin="round"/></svg>
<div style="position:absolute;top:1755.5px;font-size:26px;line-height:26px;font-weight:400;-webkit-text-stroke:0.9px #262626;color:#262626;white-space:nowrap;letter-spacing:-0.114px;left:2629.5px;"><span id="t66">Исполнитель</span></div>
<svg style="position:absolute;left:2795.5px;top:1759px" width="15" height="22" viewBox="0 0 15 22"><path d="M1 8.3 L7.5 1 L14 8.3 Z M1 11.7 L7.5 19 L14 11.7 Z" fill="#dfdfdf" stroke="#dfdfdf" stroke-width="0.8" stroke-linejoin="round"/></svg>
<div style="position:absolute;top:1738px;font-size:27px;line-height:27px;font-weight:400;-webkit-text-stroke:0.7px #262626;color:#262626;white-space:nowrap;left:1496.5px;width:3000px;text-align:center;"><span id="t67">Длительность</span></div>
<div style="position:absolute;top:1771px;font-size:27px;line-height:27px;font-weight:400;-webkit-text-stroke:0.7px #262626;color:#262626;white-space:nowrap;left:1496.5px;width:3000px;text-align:center;"><span id="t68">выполнения</span></div>
<svg style="position:absolute;left:3141.5px;top:1776.5px" width="15" height="22" viewBox="0 0 15 22"><path d="M1 8.3 L7.5 1 L14 8.3 Z M1 11.7 L7.5 19 L14 11.7 Z" fill="#dfdfdf" stroke="#dfdfdf" stroke-width="0.8" stroke-linejoin="round"/></svg>
<div style="position:absolute;left:611px;top:1816.5px;width:2552px;height:100.0px;background:#fafafa;"></div>
<div style="position:absolute;left:611px;top:1916.5px;width:2552px;height:2.0px;background:#e6e6e6;"></div>
<div style="position:absolute;left:611px;top:1918.5px;width:2552px;height:99.0px;background:#ffffff;"></div>
<div style="position:absolute;left:611px;top:2017.5px;width:2552px;height:2.0px;background:#e6e6e6;"></div>
<div style="position:absolute;left:611px;top:2019.5px;width:2552px;height:99.0px;background:#fafafa;"></div>
<div style="position:absolute;left:611px;top:2118.5px;width:2552px;height:2.0px;background:#e6e6e6;"></div>
<div style="position:absolute;left:611px;top:2120.5px;width:2552px;height:53.5px;background:#ffffff;"></div>
<div style="position:absolute;left:2850px;top:1816.5px;width:313px;height:100.0px;background:#e4a4ab;"></div>
<div style="position:absolute;left:2850px;top:1918.5px;width:313px;height:99.0px;background:#fcf4f4;"></div>
<div style="position:absolute;top:1833.5px;font-size:28px;line-height:28px;font-weight:400;-webkit-text-stroke:0.6px #3b86a8;color:#3b86a8;white-space:nowrap;left:632px;"><span id="t69">Ис</span></div>
<div style="position:absolute;top:1833.5px;font-size:28px;line-height:28px;font-weight:400;-webkit-text-stroke:0.6px #3b86a8;color:#3b86a8;white-space:nowrap;letter-spacing:-0.889px;left:-1188px;width:3000px;text-align:right;"><span id="t70">легович/ПИР</span></div>
<div style="position:absolute;top:1866px;font-size:28px;line-height:28px;font-weight:400;-webkit-text-stroke:0.6px #3b86a8;color:#3b86a8;white-space:nowrap;left:632px;"><span id="t71">40</span></div>
<svg style="position:absolute;left:653px;top:1840px" width="1005" height="34" viewBox="0 0 1005 34"><rect x="0" y="0" width="1005" height="34" fill="#fafafa"/><rect x="0" y="0" width="20" height="15" fill="rgb(140, 178, 196)" fill-opacity="0.36"/><rect x="20" y="0" width="20" height="15" fill="rgb(140, 178, 196)" fill-opacity="0.39"/><rect x="40" y="0" width="20" height="15" fill="rgb(140, 178, 196)" fill-opacity="0.48"/><rect x="60" y="0" width="20" height="15" fill="rgb(140, 178, 196)" fill-opacity="0.37"/><rect x="80" y="0" width="20" height="15" fill="rgb(140, 178, 196)" fill-opacity="0.38"/><rect x="100" y="0" width="20" height="15" fill="rgb(140, 178, 196)" fill-opacity="0.40"/><rect x="120" y="0" width="20" height="15" fill="rgb(140, 178, 196)" fill-opacity="0.30"/><rect x="140" y="0" width="20" height="15" fill="rgb(140, 178, 196)" fill-opacity="0.38"/><rect x="160" y="0" width="20" height="15" fill="rgb(140, 178, 196)" fill-opacity="0.41"/><rect x="180" y="0" width="20" height="15" fill="rgb(140, 178, 196)" fill-opacity="0.45"/><rect x="200" y="0" width="20" height="15" fill="rgb(140, 178, 196)" fill-opacity="0.27"/><rect x="220" y="0" width="20" height="15" fill="rgb(140, 178, 196)" fill-opacity="0.33"/><rect x="240" y="0" width="20" height="15" fill="rgb(140, 178, 196)" fill-opacity="0.27"/><rect x="260" y="0" width="20" height="15" fill="rgb(140, 178, 196)" fill-opacity="0.45"/><rect x="280" y="0" width="20" height="15" fill="rgb(140, 178, 196)" fill-opacity="0.42"/><rect x="300" y="0" width="20" height="15" fill="rgb(140, 178, 196)" fill-opacity="0.26"/><rect x="320" y="0" width="20" height="15" fill="rgb(140, 178, 196)" fill-opacity="0.50"/><rect x="340" y="0" width="20" height="15" fill="rgb(140, 178, 196)" fill-opacity="0.49"/><rect x="360" y="0" width="20" height="15" fill="rgb(140, 178, 196)" fill-opacity="0.41"/><rect x="380" y="0" width="20" height="15" fill="rgb(140, 178, 196)" fill-opacity="0.40"/><rect x="400" y="0" width="20" height="15" fill="rgb(140, 178, 196)" fill-opacity="0.29"/><rect x="420" y="0" width="20" height="15" fill="rgb(140, 178, 196)" fill-opacity="0.25"/><rect x="440" y="0" width="20" height="15" fill="rgb(140, 178, 196)" fill-opacity="0.38"/><rect x="460" y="0" width="20" height="15" fill="rgb(140, 178, 196)" fill-opacity="0.26"/><rect x="480" y="0" width="20" height="15" fill="rgb(140, 178, 196)" fill-opacity="0.30"/><rect x="500" y="0" width="20" height="15" fill="rgb(140, 178, 196)" fill-opacity="0.31"/><rect x="520" y="0" width="20" height="15" fill="rgb(140, 178, 196)" fill-opacity="0.26"/><rect x="540" y="0" width="20" height="15" fill="rgb(140, 178, 196)" fill-opacity="0.37"/><rect x="560" y="0" width="20" height="15" fill="rgb(140, 178, 196)" fill-opacity="0.36"/><rect x="580" y="0" width="20" height="15" fill="rgb(140, 178, 196)" fill-opacity="0.46"/><rect x="600" y="0" width="20" height="15" fill="rgb(140, 178, 196)" fill-opacity="0.38"/><rect x="620" y="0" width="20" height="15" fill="rgb(140, 178, 196)" fill-opacity="0.41"/><rect x="640" y="0" width="20" height="15" fill="rgb(140, 178, 196)" fill-opacity="0.37"/><rect x="660" y="0" width="20" height="15" fill="rgb(140, 178, 196)" fill-opacity="0.42"/><rect x="680" y="0" width="20" height="15" fill="rgb(140, 178, 196)" fill-opacity="0.36"/><rect x="700" y="0" width="20" height="15" fill="rgb(140, 178, 196)" fill-opacity="0.32"/><rect x="720" y="0" width="20" height="15" fill="rgb(140, 178, 196)" fill-opacity="0.50"/><rect x="740" y="0" width="20" height="15" fill="rgb(140, 178, 196)" fill-opacity="0.50"/><rect x="760" y="0" width="20" height="15" fill="rgb(140, 178, 196)" fill-opacity="0.46"/><rect x="780" y="0" width="20" height="15" fill="rgb(140, 178, 196)" fill-opacity="0.43"/><rect x="800" y="0" width="20" height="15" fill="rgb(140, 178, 196)" fill-opacity="0.33"/><rect x="820" y="0" width="20" height="15" fill="rgb(140, 178, 196)" fill-opacity="0.31"/><rect x="840" y="0" width="20" height="15" fill="rgb(140, 178, 196)" fill-opacity="0.32"/><rect x="860" y="0" width="20" height="15" fill="rgb(140, 178, 196)" fill-opacity="0.27"/><rect x="880" y="0" width="20" height="15" fill="rgb(140, 178, 196)" fill-opacity="0.44"/><rect x="900" y="0" width="20" height="15" fill="rgb(140, 178, 196)" fill-opacity="0.35"/><rect x="920" y="0" width="20" height="15" fill="rgb(140, 178, 196)" fill-opacity="0.46"/><rect x="940" y="0" width="20" height="15" fill="rgb(140, 178, 196)" fill-opacity="0.35"/><rect x="960" y="0" width="20" height="15" fill="rgb(140, 178, 196)" fill-opacity="0.49"/><rect x="980" y="0" width="20" height="15" fill="rgb(140, 178, 196)" fill-opacity="0.46"/><rect x="1000" y="0" width="5" height="15" fill="rgb(140, 178, 196)" fill-opacity="0.25"/><rect x="0" y="15" width="20" height="19" fill="rgb(140, 178, 196)" fill-opacity="0.09"/><rect x="20" y="15" width="20" height="19" fill="rgb(140, 178, 196)" fill-opacity="0.21"/><rect x="40" y="15" width="20" height="19" fill="rgb(140, 178, 196)" fill-opacity="0.14"/><rect x="60" y="15" width="20" height="19" fill="rgb(140, 178, 196)" fill-opacity="0.22"/><rect x="80" y="15" width="20" height="19" fill="rgb(140, 178, 196)" fill-opacity="0.12"/><rect x="100" y="15" width="20" height="19" fill="rgb(140, 178, 196)" fill-opacity="0.07"/><rect x="120" y="15" width="20" height="19" fill="rgb(140, 178, 196)" fill-opacity="0.16"/><rect x="140" y="15" width="20" height="19" fill="rgb(140, 178, 196)" fill-opacity="0.18"/><rect x="160" y="15" width="20" height="19" fill="rgb(140, 178, 196)" fill-opacity="0.10"/><rect x="180" y="15" width="20" height="19" fill="rgb(140, 178, 196)" fill-opacity="0.07"/><rect x="200" y="15" width="20" height="19" fill="rgb(140, 178, 196)" fill-opacity="0.11"/><rect x="220" y="15" width="20" height="19" fill="rgb(140, 178, 196)" fill-opacity="0.21"/><rect x="240" y="15" width="20" height="19" fill="rgb(140, 178, 196)" fill-opacity="0.18"/><rect x="260" y="15" width="20" height="19" fill="rgb(140, 178, 196)" fill-opacity="0.08"/><rect x="280" y="15" width="20" height="19" fill="rgb(140, 178, 196)" fill-opacity="0.10"/><rect x="300" y="15" width="20" height="19" fill="rgb(140, 178, 196)" fill-opacity="0.08"/><rect x="320" y="15" width="20" height="19" fill="rgb(140, 178, 196)" fill-opacity="0.07"/><rect x="340" y="15" width="20" height="19" fill="rgb(140, 178, 196)" fill-opacity="0.19"/><rect x="360" y="15" width="20" height="19" fill="rgb(140, 178, 196)" fill-opacity="0.09"/><rect x="380" y="15" width="20" height="19" fill="rgb(140, 178, 196)" fill-opacity="0.15"/><rect x="400" y="15" width="20" height="19" fill="rgb(140, 178, 196)" fill-opacity="0.13"/><rect x="420" y="15" width="20" height="19" fill="rgb(140, 178, 196)" fill-opacity="0.09"/><rect x="440" y="15" width="20" height="19" fill="rgb(140, 178, 196)" fill-opacity="0.18"/><rect x="460" y="15" width="20" height="19" fill="rgb(140, 178, 196)" fill-opacity="0.08"/><rect x="480" y="15" width="20" height="19" fill="rgb(140, 178, 196)" fill-opacity="0.16"/><rect x="500" y="15" width="20" height="19" fill="rgb(140, 178, 196)" fill-opacity="0.08"/><rect x="520" y="15" width="20" height="19" fill="rgb(140, 178, 196)" fill-opacity="0.13"/><rect x="540" y="15" width="20" height="19" fill="rgb(140, 178, 196)" fill-opacity="0.09"/><rect x="560" y="15" width="20" height="19" fill="rgb(140, 178, 196)" fill-opacity="0.10"/><rect x="580" y="15" width="20" height="19" fill="rgb(140, 178, 196)" fill-opacity="0.22"/><rect x="600" y="15" width="20" height="19" fill="rgb(140, 178, 196)" fill-opacity="0.19"/><rect x="620" y="15" width="20" height="19" fill="rgb(140, 178, 196)" fill-opacity="0.11"/><rect x="640" y="15" width="20" height="19" fill="rgb(140, 178, 196)" fill-opacity="0.20"/><rect x="660" y="15" width="20" height="19" fill="rgb(140, 178, 196)" fill-opacity="0.09"/><rect x="680" y="15" width="20" height="19" fill="rgb(140, 178, 196)" fill-opacity="0.12"/><rect x="700" y="15" width="20" height="19" fill="rgb(140, 178, 196)" fill-opacity="0.20"/><rect x="720" y="15" width="20" height="19" fill="rgb(140, 178, 196)" fill-opacity="0.16"/><rect x="740" y="15" width="20" height="19" fill="rgb(140, 178, 196)" fill-opacity="0.08"/><rect x="760" y="15" width="20" height="19" fill="rgb(140, 178, 196)" fill-opacity="0.22"/><rect x="780" y="15" width="20" height="19" fill="rgb(140, 178, 196)" fill-opacity="0.09"/><rect x="800" y="15" width="20" height="19" fill="rgb(140, 178, 196)" fill-opacity="0.10"/><rect x="820" y="15" width="20" height="19" fill="rgb(140, 178, 196)" fill-opacity="0.18"/><rect x="840" y="15" width="20" height="19" fill="rgb(140, 178, 196)" fill-opacity="0.11"/><rect x="860" y="15" width="20" height="19" fill="rgb(140, 178, 196)" fill-opacity="0.11"/><rect x="880" y="15" width="20" height="19" fill="rgb(140, 178, 196)" fill-opacity="0.07"/><rect x="900" y="15" width="20" height="19" fill="rgb(140, 178, 196)" fill-opacity="0.07"/><rect x="920" y="15" width="20" height="19" fill="rgb(140, 178, 196)" fill-opacity="0.15"/><rect x="940" y="15" width="20" height="19" fill="rgb(140, 178, 196)" fill-opacity="0.10"/><rect x="960" y="15" width="20" height="19" fill="rgb(140, 178, 196)" fill-opacity="0.16"/><rect x="980" y="15" width="20" height="19" fill="rgb(140, 178, 196)" fill-opacity="0.12"/><rect x="1000" y="15" width="5" height="19" fill="rgb(140, 178, 196)" fill-opacity="0.13"/></svg>
<svg style="position:absolute;left:653px;top:1874px" width="547" height="20" viewBox="0 0 547 20"><rect x="0" y="0" width="547" height="20" fill="#fafafa"/><rect x="0" y="0" width="20" height="20" fill="rgb(140, 178, 196)" fill-opacity="0.59"/><rect x="20" y="0" width="20" height="20" fill="rgb(140, 178, 196)" fill-opacity="0.66"/><rect x="40" y="0" width="20" height="20" fill="rgb(140, 178, 196)" fill-opacity="0.67"/><rect x="60" y="0" width="20" height="20" fill="rgb(140, 178, 196)" fill-opacity="0.46"/><rect x="80" y="0" width="20" height="20" fill="rgb(140, 178, 196)" fill-opacity="0.40"/><rect x="100" y="0" width="20" height="20" fill="rgb(140, 178, 196)" fill-opacity="0.55"/><rect x="120" y="0" width="20" height="20" fill="rgb(140, 178, 196)" fill-opacity="0.51"/><rect x="140" y="0" width="20" height="20" fill="rgb(140, 178, 196)" fill-opacity="0.72"/><rect x="160" y="0" width="20" height="20" fill="rgb(140, 178, 196)" fill-opacity="0.68"/><rect x="180" y="0" width="20" height="20" fill="rgb(140, 178, 196)" fill-opacity="0.64"/><rect x="200" y="0" width="20" height="20" fill="rgb(140, 178, 196)" fill-opacity="0.62"/><rect x="220" y="0" width="20" height="20" fill="rgb(140, 178, 196)" fill-opacity="0.66"/><rect x="240" y="0" width="20" height="20" fill="rgb(140, 178, 196)" fill-opacity="0.46"/><rect x="260" y="0" width="20" height="20" fill="rgb(140, 178, 196)" fill-opacity="0.58"/><rect x="280" y="0" width="20" height="20" fill="rgb(140, 178, 196)" fill-opacity="0.46"/><rect x="300" y="0" width="20" height="20" fill="rgb(140, 178, 196)" fill-opacity="0.76"/><rect x="320" y="0" width="20" height="20" fill="rgb(140, 178, 196)" fill-opacity="0.42"/><rect x="340" y="0" width="20" height="20" fill="rgb(140, 178, 196)" fill-opacity="0.73"/><rect x="360" y="0" width="20" height="20" fill="rgb(140, 178, 196)" fill-opacity="0.43"/><rect x="380" y="0" width="20" height="20" fill="rgb(140, 178, 196)" fill-opacity="0.67"/><rect x="400" y="0" width="20" height="20" fill="rgb(140, 178, 196)" fill-opacity="0.53"/><rect x="420" y="0" width="20" height="20" fill="rgb(140, 178, 196)" fill-opacity="0.56"/><rect x="440" y="0" width="20" height="20" fill="rgb(140, 178, 196)" fill-opacity="0.74"/><rect x="460" y="0" width="20" height="20" fill="rgb(140, 178, 196)" fill-opacity="0.41"/><rect x="480" y="0" width="20" height="20" fill="rgb(140, 178, 196)" fill-opacity="0.42"/><rect x="500" y="0" width="20" height="20" fill="rgb(140, 178, 196)" fill-opacity="0.77"/><rect x="520" y="0" width="20" height="20" fill="rgb(140, 178, 196)" fill-opacity="0.60"/><rect x="540" y="0" width="7" height="20" fill="rgb(140, 178, 196)" fill-opacity="0.44"/></svg>
<div style="position:absolute;left:653px;top:1894px;width:1005px;height:34px;background:rgba(250,250,250,1);"></div>
<div style="position:absolute;top:1951px;font-size:28px;line-height:28px;font-weight:400;-webkit-text-stroke:0.6px #3b86a8;color:#3b86a8;white-space:nowrap;left:632px;"><span id="t72">294</span></div>
<svg style="position:absolute;left:670px;top:1954px" width="830" height="40" viewBox="0 0 830 40"><rect x="0" y="0" width="830" height="40" fill="#ffffff"/><rect x="0" y="0" width="20" height="20" fill="rgb(140, 178, 196)" fill-opacity="0.40"/><rect x="20" y="0" width="20" height="20" fill="rgb(140, 178, 196)" fill-opacity="0.57"/><rect x="40" y="0" width="20" height="20" fill="rgb(140, 178, 196)" fill-opacity="0.57"/><rect x="60" y="0" width="20" height="20" fill="rgb(140, 178, 196)" fill-opacity="0.64"/><rect x="80" y="0" width="20" height="20" fill="rgb(140, 178, 196)" fill-opacity="0.37"/><rect x="100" y="0" width="20" height="20" fill="rgb(140, 178, 196)" fill-opacity="0.39"/><rect x="120" y="0" width="20" height="20" fill="rgb(140, 178, 196)" fill-opacity="0.36"/><rect x="140" y="0" width="20" height="20" fill="rgb(140, 178, 196)" fill-opacity="0.39"/><rect x="160" y="0" width="20" height="20" fill="rgb(140, 178, 196)" fill-opacity="0.59"/><rect x="180" y="0" width="20" height="20" fill="rgb(140, 178, 196)" fill-opacity="0.35"/><rect x="200" y="0" width="20" height="20" fill="rgb(140, 178, 196)" fill-opacity="0.51"/><rect x="220" y="0" width="20" height="20" fill="rgb(140, 178, 196)" fill-opacity="0.39"/><rect x="240" y="0" width="20" height="20" fill="rgb(140, 178, 196)" fill-opacity="0.42"/><rect x="260" y="0" width="20" height="20" fill="rgb(140, 178, 196)" fill-opacity="0.47"/><rect x="280" y="0" width="20" height="20" fill="rgb(140, 178, 196)" fill-opacity="0.64"/><rect x="300" y="0" width="20" height="20" fill="rgb(140, 178, 196)" fill-opacity="0.54"/><rect x="320" y="0" width="20" height="20" fill="rgb(140, 178, 196)" fill-opacity="0.31"/><rect x="340" y="0" width="20" height="20" fill="rgb(140, 178, 196)" fill-opacity="0.41"/><rect x="360" y="0" width="20" height="20" fill="rgb(140, 178, 196)" fill-opacity="0.36"/><rect x="380" y="0" width="20" height="20" fill="rgb(140, 178, 196)" fill-opacity="0.65"/><rect x="400" y="0" width="20" height="20" fill="rgb(140, 178, 196)" fill-opacity="0.62"/><rect x="420" y="0" width="20" height="20" fill="rgb(140, 178, 196)" fill-opacity="0.62"/><rect x="440" y="0" width="20" height="20" fill="rgb(140, 178, 196)" fill-opacity="0.63"/><rect x="460" y="0" width="20" height="20" fill="rgb(140, 178, 196)" fill-opacity="0.60"/><rect x="480" y="0" width="20" height="20" fill="rgb(140, 178, 196)" fill-opacity="0.68"/><rect x="500" y="0" width="20" height="20" fill="rgb(140, 178, 196)" fill-opacity="0.62"/><rect x="520" y="0" width="20" height="20" fill="rgb(140, 178, 196)" fill-opacity="0.40"/><rect x="540" y="0" width="20" height="20" fill="rgb(140, 178, 196)" fill-opacity="0.64"/><rect x="560" y="0" width="20" height="20" fill="rgb(140, 178, 196)" fill-opacity="0.49"/><rect x="580" y="0" width="20" height="20" fill="rgb(140, 178, 196)" fill-opacity="0.60"/><rect x="600" y="0" width="20" height="20" fill="rgb(140, 178, 196)" fill-opacity="0.53"/><rect x="620" y="0" width="20" height="20" fill="rgb(140, 178, 196)" fill-opacity="0.47"/><rect x="640" y="0" width="20" height="20" fill="rgb(140, 178, 196)" fill-opacity="0.45"/><rect x="660" y="0" width="20" height="20" fill="rgb(140, 178, 196)" fill-opacity="0.47"/><rect x="680" y="0" width="20" height="20" fill="rgb(140, 178, 196)" fill-opacity="0.43"/><rect x="700" y="0" width="20" height="20" fill="rgb(140, 178, 196)" fill-opacity="0.35"/><rect x="720" y="0" width="20" height="20" fill="rgb(140, 178, 196)" fill-opacity="0.63"/><rect x="740" y="0" width="20" height="20" fill="rgb(140, 178, 196)" fill-opacity="0.62"/><rect x="760" y="0" width="20" height="20" fill="rgb(140, 178, 196)" fill-opacity="0.69"/><rect x="780" y="0" width="20" height="20" fill="rgb(140, 178, 196)" fill-opacity="0.58"/><rect x="800" y="0" width="20" height="20" fill="rgb(140, 178, 196)" fill-opacity="0.52"/><rect x="820" y="0" width="10" height="20" fill="rgb(140, 178, 196)" fill-opacity="0.60"/><rect x="0" y="20" width="20" height="20" fill="rgb(140, 178, 196)" fill-opacity="0.02"/><rect x="20" y="20" width="20" height="20" fill="rgb(140, 178, 196)" fill-opacity="0.08"/><rect x="40" y="20" width="20" height="20" fill="rgb(140, 178, 196)" fill-opacity="0.05"/><rect x="60" y="20" width="20" height="20" fill="rgb(140, 178, 196)" fill-opacity="0.02"/><rect x="80" y="20" width="20" height="20" fill="rgb(140, 178, 196)" fill-opacity="0.02"/><rect x="100" y="20" width="20" height="20" fill="rgb(140, 178, 196)" fill-opacity="0.06"/><rect x="120" y="20" width="20" height="20" fill="rgb(140, 178, 196)" fill-opacity="0.03"/><rect x="140" y="20" width="20" height="20" fill="rgb(140, 178, 196)" fill-opacity="0.06"/><rect x="160" y="20" width="20" height="20" fill="rgb(140, 178, 196)" fill-opacity="0.07"/><rect x="180" y="20" width="20" height="20" fill="rgb(140, 178, 196)" fill-opacity="0.05"/><rect x="200" y="20" width="20" height="20" fill="rgb(140, 178, 196)" fill-opacity="0.02"/><rect x="220" y="20" width="20" height="20" fill="rgb(140, 178, 196)" fill-opacity="0.06"/><rect x="240" y="20" width="20" height="20" fill="rgb(140, 178, 196)" fill-opacity="0.03"/><rect x="260" y="20" width="20" height="20" fill="rgb(140, 178, 196)" fill-opacity="0.03"/><rect x="280" y="20" width="20" height="20" fill="rgb(140, 178, 196)" fill-opacity="0.02"/><rect x="300" y="20" width="20" height="20" fill="rgb(140, 178, 196)" fill-opacity="0.04"/><rect x="320" y="20" width="20" height="20" fill="rgb(140, 178, 196)" fill-opacity="0.01"/><rect x="340" y="20" width="20" height="20" fill="rgb(140, 178, 196)" fill-opacity="0.08"/><rect x="360" y="20" width="20" height="20" fill="rgb(140, 178, 196)" fill-opacity="0.11"/><rect x="380" y="20" width="20" height="20" fill="rgb(140, 178, 196)" fill-opacity="0.05"/><rect x="400" y="20" width="20" height="20" fill="rgb(140, 178, 196)" fill-opacity="0.09"/><rect x="420" y="20" width="20" height="20" fill="rgb(140, 178, 196)" fill-opacity="0.11"/><rect x="440" y="20" width="20" height="20" fill="rgb(140, 178, 196)" fill-opacity="0.01"/><rect x="460" y="20" width="20" height="20" fill="rgb(140, 178, 196)" fill-opacity="0.02"/><rect x="480" y="20" width="20" height="20" fill="rgb(140, 178, 196)" fill-opacity="0.10"/><rect x="500" y="20" width="20" height="20" fill="rgb(140, 178, 196)" fill-opacity="0.10"/><rect x="520" y="20" width="20" height="20" fill="rgb(140, 178, 196)" fill-opacity="0.08"/><rect x="540" y="20" width="20" height="20" fill="rgb(140, 178, 196)" fill-opacity="0.02"/><rect x="560" y="20" width="20" height="20" fill="rgb(140, 178, 196)" fill-opacity="0.05"/><rect x="580" y="20" width="20" height="20" fill="rgb(140, 178, 196)" fill-opacity="0.10"/><rect x="600" y="20" width="20" height="20" fill="rgb(140, 178, 196)" fill-opacity="0.11"/><rect x="620" y="20" width="20" height="20" fill="rgb(140, 178, 196)" fill-opacity="0.10"/><rect x="640" y="20" width="20" height="20" fill="rgb(140, 178, 196)" fill-opacity="0.02"/><rect x="660" y="20" width="20" height="20" fill="rgb(140, 178, 196)" fill-opacity="0.10"/><rect x="680" y="20" width="20" height="20" fill="rgb(140, 178, 196)" fill-opacity="0.04"/><rect x="700" y="20" width="20" height="20" fill="rgb(140, 178, 196)" fill-opacity="0.09"/><rect x="720" y="20" width="20" height="20" fill="rgb(140, 178, 196)" fill-opacity="0.02"/><rect x="740" y="20" width="20" height="20" fill="rgb(140, 178, 196)" fill-opacity="0.12"/><rect x="760" y="20" width="20" height="20" fill="rgb(140, 178, 196)" fill-opacity="0.07"/><rect x="780" y="20" width="20" height="20" fill="rgb(140, 178, 196)" fill-opacity="0.09"/><rect x="800" y="20" width="20" height="20" fill="rgb(140, 178, 196)" fill-opacity="0.03"/><rect x="820" y="20" width="10" height="20" fill="rgb(140, 178, 196)" fill-opacity="0.07"/></svg>
<div style="position:absolute;top:1951px;font-size:28px;line-height:28px;font-weight:400;-webkit-text-stroke:0.6px #3b86a8;color:#3b86a8;white-space:nowrap;left:-1484px;width:3000px;text-align:right;"><span id="t73">y</span></div>
<div style="position:absolute;top:2052px;font-size:28px;line-height:28px;font-weight:400;-webkit-text-stroke:0.6px #3b86a8;color:#3b86a8;white-space:nowrap;left:632px;"><span id="t74">Вне</span></div>
<svg style="position:absolute;left:675px;top:2054px" width="633" height="40" viewBox="0 0 633 40"><rect x="0" y="0" width="633" height="40" fill="#fafafa"/><rect x="0" y="0" width="20" height="20" fill="rgb(140, 178, 196)" fill-opacity="0.33"/><rect x="20" y="0" width="20" height="20" fill="rgb(140, 178, 196)" fill-opacity="0.51"/><rect x="40" y="0" width="20" height="20" fill="rgb(140, 178, 196)" fill-opacity="0.50"/><rect x="60" y="0" width="20" height="20" fill="rgb(140, 178, 196)" fill-opacity="0.58"/><rect x="80" y="0" width="20" height="20" fill="rgb(140, 178, 196)" fill-opacity="0.38"/><rect x="100" y="0" width="20" height="20" fill="rgb(140, 178, 196)" fill-opacity="0.38"/><rect x="120" y="0" width="20" height="20" fill="rgb(140, 178, 196)" fill-opacity="0.52"/><rect x="140" y="0" width="20" height="20" fill="rgb(140, 178, 196)" fill-opacity="0.50"/><rect x="160" y="0" width="20" height="20" fill="rgb(140, 178, 196)" fill-opacity="0.39"/><rect x="180" y="0" width="20" height="20" fill="rgb(140, 178, 196)" fill-opacity="0.51"/><rect x="200" y="0" width="20" height="20" fill="rgb(140, 178, 196)" fill-opacity="0.42"/><rect x="220" y="0" width="20" height="20" fill="rgb(140, 178, 196)" fill-opacity="0.53"/><rect x="240" y="0" width="20" height="20" fill="rgb(140, 178, 196)" fill-opacity="0.34"/><rect x="260" y="0" width="20" height="20" fill="rgb(140, 178, 196)" fill-opacity="0.37"/><rect x="280" y="0" width="20" height="20" fill="rgb(140, 178, 196)" fill-opacity="0.57"/><rect x="300" y="0" width="20" height="20" fill="rgb(140, 178, 196)" fill-opacity="0.41"/><rect x="320" y="0" width="20" height="20" fill="rgb(140, 178, 196)" fill-opacity="0.38"/><rect x="340" y="0" width="20" height="20" fill="rgb(140, 178, 196)" fill-opacity="0.54"/><rect x="360" y="0" width="20" height="20" fill="rgb(140, 178, 196)" fill-opacity="0.49"/><rect x="380" y="0" width="20" height="20" fill="rgb(140, 178, 196)" fill-opacity="0.34"/><rect x="400" y="0" width="20" height="20" fill="rgb(140, 178, 196)" fill-opacity="0.47"/><rect x="420" y="0" width="20" height="20" fill="rgb(140, 178, 196)" fill-opacity="0.50"/><rect x="440" y="0" width="20" height="20" fill="rgb(140, 178, 196)" fill-opacity="0.35"/><rect x="460" y="0" width="20" height="20" fill="rgb(140, 178, 196)" fill-opacity="0.50"/><rect x="480" y="0" width="20" height="20" fill="rgb(140, 178, 196)" fill-opacity="0.34"/><rect x="500" y="0" width="20" height="20" fill="rgb(140, 178, 196)" fill-opacity="0.40"/><rect x="520" y="0" width="20" height="20" fill="rgb(140, 178, 196)" fill-opacity="0.32"/><rect x="540" y="0" width="20" height="20" fill="rgb(140, 178, 196)" fill-opacity="0.36"/><rect x="560" y="0" width="20" height="20" fill="rgb(140, 178, 196)" fill-opacity="0.59"/><rect x="580" y="0" width="20" height="20" fill="rgb(140, 178, 196)" fill-opacity="0.42"/><rect x="600" y="0" width="20" height="20" fill="rgb(140, 178, 196)" fill-opacity="0.60"/><rect x="620" y="0" width="13" height="20" fill="rgb(140, 178, 196)" fill-opacity="0.43"/><rect x="0" y="20" width="20" height="20" fill="rgb(140, 178, 196)" fill-opacity="0.10"/><rect x="20" y="20" width="20" height="20" fill="rgb(140, 178, 196)" fill-opacity="0.13"/><rect x="40" y="20" width="20" height="20" fill="rgb(140, 178, 196)" fill-opacity="0.11"/><rect x="60" y="20" width="20" height="20" fill="rgb(140, 178, 196)" fill-opacity="0.03"/><rect x="80" y="20" width="20" height="20" fill="rgb(140, 178, 196)" fill-opacity="0.10"/><rect x="100" y="20" width="20" height="20" fill="rgb(140, 178, 196)" fill-opacity="0.10"/><rect x="120" y="20" width="20" height="20" fill="rgb(140, 178, 196)" fill-opacity="0.04"/><rect x="140" y="20" width="20" height="20" fill="rgb(140, 178, 196)" fill-opacity="0.03"/><rect x="160" y="20" width="20" height="20" fill="rgb(140, 178, 196)" fill-opacity="0.13"/><rect x="180" y="20" width="20" height="20" fill="rgb(140, 178, 196)" fill-opacity="0.09"/><rect x="200" y="20" width="20" height="20" fill="rgb(140, 178, 196)" fill-opacity="0.05"/><rect x="220" y="20" width="20" height="20" fill="rgb(140, 178, 196)" fill-opacity="0.08"/><rect x="240" y="20" width="20" height="20" fill="rgb(140, 178, 196)" fill-opacity="0.05"/><rect x="260" y="20" width="20" height="20" fill="rgb(140, 178, 196)" fill-opacity="0.12"/><rect x="280" y="20" width="20" height="20" fill="rgb(140, 178, 196)" fill-opacity="0.09"/><rect x="300" y="20" width="20" height="20" fill="rgb(140, 178, 196)" fill-opacity="0.03"/><rect x="320" y="20" width="20" height="20" fill="rgb(140, 178, 196)" fill-opacity="0.13"/><rect x="340" y="20" width="20" height="20" fill="rgb(140, 178, 196)" fill-opacity="0.03"/><rect x="360" y="20" width="20" height="20" fill="rgb(140, 178, 196)" fill-opacity="0.06"/><rect x="380" y="20" width="20" height="20" fill="rgb(140, 178, 196)" fill-opacity="0.02"/><rect x="400" y="20" width="20" height="20" fill="rgb(140, 178, 196)" fill-opacity="0.12"/><rect x="420" y="20" width="20" height="20" fill="rgb(140, 178, 196)" fill-opacity="0.03"/><rect x="440" y="20" width="20" height="20" fill="rgb(140, 178, 196)" fill-opacity="0.09"/><rect x="460" y="20" width="20" height="20" fill="rgb(140, 178, 196)" fill-opacity="0.03"/><rect x="480" y="20" width="20" height="20" fill="rgb(140, 178, 196)" fill-opacity="0.08"/><rect x="500" y="20" width="20" height="20" fill="rgb(140, 178, 196)" fill-opacity="0.11"/><rect x="520" y="20" width="20" height="20" fill="rgb(140, 178, 196)" fill-opacity="0.09"/><rect x="540" y="20" width="20" height="20" fill="rgb(140, 178, 196)" fill-opacity="0.08"/><rect x="560" y="20" width="20" height="20" fill="rgb(140, 178, 196)" fill-opacity="0.08"/><rect x="580" y="20" width="20" height="20" fill="rgb(140, 178, 196)" fill-opacity="0.08"/><rect x="600" y="20" width="20" height="20" fill="rgb(140, 178, 196)" fill-opacity="0.10"/><rect x="620" y="20" width="13" height="20" fill="rgb(140, 178, 196)" fill-opacity="0.03"/></svg>
<div style="position:absolute;top:2052px;font-size:28px;line-height:28px;font-weight:400;-webkit-text-stroke:0.6px #3b86a8;color:#3b86a8;white-space:nowrap;left:-1680px;width:3000px;text-align:right;"><span id="t75">С</span></div>
<div style="position:absolute;top:2153px;font-size:28px;line-height:28px;font-weight:400;-webkit-text-stroke:0.6px #3b86a8;color:#3b86a8;white-space:nowrap;left:632px;"><span id="t76">Вн</span></div>
<svg style="position:absolute;left:664px;top:2154px" width="652" height="20" viewBox="0 0 652 20"><rect x="0" y="0" width="652" height="20" fill="#ffffff"/><rect x="0" y="0" width="20" height="20" fill="rgb(140, 178, 196)" fill-opacity="0.59"/><rect x="20" y="0" width="20" height="20" fill="rgb(140, 178, 196)" fill-opacity="0.30"/><rect x="40" y="0" width="20" height="20" fill="rgb(140, 178, 196)" fill-opacity="0.52"/><rect x="60" y="0" width="20" height="20" fill="rgb(140, 178, 196)" fill-opacity="0.35"/><rect x="80" y="0" width="20" height="20" fill="rgb(140, 178, 196)" fill-opacity="0.60"/><rect x="100" y="0" width="20" height="20" fill="rgb(140, 178, 196)" fill-opacity="0.31"/><rect x="120" y="0" width="20" height="20" fill="rgb(140, 178, 196)" fill-opacity="0.56"/><rect x="140" y="0" width="20" height="20" fill="rgb(140, 178, 196)" fill-opacity="0.50"/><rect x="160" y="0" width="20" height="20" fill="rgb(140, 178, 196)" fill-opacity="0.56"/><rect x="180" y="0" width="20" height="20" fill="rgb(140, 178, 196)" fill-opacity="0.60"/><rect x="200" y="0" width="20" height="20" fill="rgb(140, 178, 196)" fill-opacity="0.37"/><rect x="220" y="0" width="20" height="20" fill="rgb(140, 178, 196)" fill-opacity="0.40"/><rect x="240" y="0" width="20" height="20" fill="rgb(140, 178, 196)" fill-opacity="0.51"/><rect x="260" y="0" width="20" height="20" fill="rgb(140, 178, 196)" fill-opacity="0.38"/><rect x="280" y="0" width="20" height="20" fill="rgb(140, 178, 196)" fill-opacity="0.38"/><rect x="300" y="0" width="20" height="20" fill="rgb(140, 178, 196)" fill-opacity="0.37"/><rect x="320" y="0" width="20" height="20" fill="rgb(140, 178, 196)" fill-opacity="0.56"/><rect x="340" y="0" width="20" height="20" fill="rgb(140, 178, 196)" fill-opacity="0.56"/><rect x="360" y="0" width="20" height="20" fill="rgb(140, 178, 196)" fill-opacity="0.54"/><rect x="380" y="0" width="20" height="20" fill="rgb(140, 178, 196)" fill-opacity="0.37"/><rect x="400" y="0" width="20" height="20" fill="rgb(140, 178, 196)" fill-opacity="0.58"/><rect x="420" y="0" width="20" height="20" fill="rgb(140, 178, 196)" fill-opacity="0.45"/><rect x="440" y="0" width="20" height="20" fill="rgb(140, 178, 196)" fill-opacity="0.37"/><rect x="460" y="0" width="20" height="20" fill="rgb(140, 178, 196)" fill-opacity="0.44"/><rect x="480" y="0" width="20" height="20" fill="rgb(140, 178, 196)" fill-opacity="0.43"/><rect x="500" y="0" width="20" height="20" fill="rgb(140, 178, 196)" fill-opacity="0.32"/><rect x="520" y="0" width="20" height="20" fill="rgb(140, 178, 196)" fill-opacity="0.47"/><rect x="540" y="0" width="20" height="20" fill="rgb(140, 178, 196)" fill-opacity="0.41"/><rect x="560" y="0" width="20" height="20" fill="rgb(140, 178, 196)" fill-opacity="0.47"/><rect x="580" y="0" width="20" height="20" fill="rgb(140, 178, 196)" fill-opacity="0.58"/><rect x="600" y="0" width="20" height="20" fill="rgb(140, 178, 196)" fill-opacity="0.49"/><rect x="620" y="0" width="20" height="20" fill="rgb(140, 178, 196)" fill-opacity="0.42"/><rect x="640" y="0" width="12" height="20" fill="rgb(140, 178, 196)" fill-opacity="0.56"/></svg>
<div style="position:absolute;top:2153px;font-size:28px;line-height:28px;font-weight:400;-webkit-text-stroke:0.6px #3b86a8;color:#3b86a8;white-space:nowrap;left:-1680px;width:3000px;text-align:right;"><span id="t77">с</span></div>
<div style="position:absolute;top:1849.5px;font-size:28px;line-height:28px;font-weight:400;color:#222;white-space:nowrap;left:496px;width:3000px;text-align:center;"><span id="t78">2024-01-22</span></div>
<div style="position:absolute;top:1951px;font-size:28px;line-height:28px;font-weight:400;color:#222;white-space:nowrap;left:496px;width:3000px;text-align:center;"><span id="t79">2025-06-10</span></div>
<div style="position:absolute;top:2053.5px;font-size:28px;line-height:28px;font-weight:400;color:#222;white-space:nowrap;left:496px;width:3000px;text-align:center;"><span id="t80">2025-07-29</span></div>
<div style="position:absolute;top:2154.5px;font-size:28px;line-height:28px;font-weight:400;color:#222;white-space:nowrap;left:496px;width:3000px;text-align:center;"><span id="t81">2025-07-29</span></div>
<div style="position:absolute;top:1833.5px;font-size:28px;line-height:28px;font-weight:400;color:#222;white-space:nowrap;letter-spacing:-0.352px;left:2186px;"><span id="t82">*Со</span></div>
<svg style="position:absolute;left:2220px;top:1827px" width="285" height="47" viewBox="0 0 285 47"><rect x="0" y="0" width="285" height="47" fill="#fafafa"/><rect x="0" y="0" width="20" height="27" fill="rgb(120, 120, 120)" fill-opacity="0.16"/><rect x="20" y="0" width="20" height="27" fill="rgb(120, 120, 120)" fill-opacity="0.28"/><rect x="40" y="0" width="20" height="27" fill="rgb(120, 120, 120)" fill-opacity="0.27"/><rect x="60" y="0" width="20" height="27" fill="rgb(120, 120, 120)" fill-opacity="0.23"/><rect x="80" y="0" width="20" height="27" fill="rgb(120, 120, 120)" fill-opacity="0.17"/><rect x="100" y="0" width="20" height="27" fill="rgb(120, 120, 120)" fill-opacity="0.30"/><rect x="120" y="0" width="20" height="27" fill="rgb(120, 120, 120)" fill-opacity="0.31"/><rect x="140" y="0" width="20" height="27" fill="rgb(120, 120, 120)" fill-opacity="0.24"/><rect x="160" y="0" width="20" height="27" fill="rgb(120, 120, 120)" fill-opacity="0.24"/><rect x="180" y="0" width="20" height="27" fill="rgb(120, 120, 120)" fill-opacity="0.17"/><rect x="200" y="0" width="20" height="27" fill="rgb(120, 120, 120)" fill-opacity="0.12"/><rect x="220" y="0" width="20" height="27" fill="rgb(120, 120, 120)" fill-opacity="0.21"/><rect x="240" y="0" width="20" height="27" fill="rgb(120, 120, 120)" fill-opacity="0.25"/><rect x="260" y="0" width="20" height="27" fill="rgb(120, 120, 120)" fill-opacity="0.14"/><rect x="280" y="0" width="5" height="27" fill="rgb(120, 120, 120)" fill-opacity="0.30"/><rect x="0" y="27" width="20" height="20" fill="rgb(120, 120, 120)" fill-opacity="0.06"/><rect x="20" y="27" width="20" height="20" fill="rgb(120, 120, 120)" fill-opacity="0.06"/><rect x="40" y="27" width="20" height="20" fill="rgb(120, 120, 120)" fill-opacity="0.04"/><rect x="60" y="27" width="20" height="20" fill="rgb(120, 120, 120)" fill-opacity="0.15"/><rect x="80" y="27" width="20" height="20" fill="rgb(120, 120, 120)" fill-opacity="0.12"/><rect x="100" y="27" width="20" height="20" fill="rgb(120, 120, 120)" fill-opacity="0.14"/><rect x="120" y="27" width="20" height="20" fill="rgb(120, 120, 120)" fill-opacity="0.10"/><rect x="140" y="27" width="20" height="20" fill="rgb(120, 120, 120)" fill-opacity="0.03"/><rect x="160" y="27" width="20" height="20" fill="rgb(120, 120, 120)" fill-opacity="0.07"/><rect x="180" y="27" width="20" height="20" fill="rgb(120, 120, 120)" fill-opacity="0.09"/><rect x="200" y="27" width="20" height="20" fill="rgb(120, 120, 120)" fill-opacity="0.04"/><rect x="220" y="27" width="20" height="20" fill="rgb(120, 120, 120)" fill-opacity="0.14"/><rect x="240" y="27" width="20" height="20" fill="rgb(120, 120, 120)" fill-opacity="0.07"/><rect x="260" y="27" width="20" height="20" fill="rgb(120, 120, 120)" fill-opacity="0.05"/><rect x="280" y="27" width="5" height="20" fill="rgb(120, 120, 120)" fill-opacity="0.13"/></svg>
<div style="position:absolute;top:1833.5px;font-size:28px;line-height:28px;font-weight:400;color:#222;white-space:nowrap;left:-464px;width:3000px;text-align:right;"><span id="t83">с с</span></div>
<svg style="position:absolute;left:2260px;top:1874px" width="199" height="20" viewBox="0 0 199 20"><rect x="0" y="0" width="199" height="20" fill="#fafafa"/><rect x="0" y="0" width="20" height="20" fill="rgb(120, 120, 120)" fill-opacity="0.44"/><rect x="20" y="0" width="20" height="20" fill="rgb(120, 120, 120)" fill-opacity="0.24"/><rect x="40" y="0" width="20" height="20" fill="rgb(120, 120, 120)" fill-opacity="0.21"/><rect x="60" y="0" width="20" height="20" fill="rgb(120, 120, 120)" fill-opacity="0.45"/><rect x="80" y="0" width="20" height="20" fill="rgb(120, 120, 120)" fill-opacity="0.25"/><rect x="100" y="0" width="20" height="20" fill="rgb(120, 120, 120)" fill-opacity="0.23"/><rect x="120" y="0" width="20" height="20" fill="rgb(120, 120, 120)" fill-opacity="0.36"/><rect x="140" y="0" width="20" height="20" fill="rgb(120, 120, 120)" fill-opacity="0.29"/><rect x="160" y="0" width="20" height="20" fill="rgb(120, 120, 120)" fill-opacity="0.42"/><rect x="180" y="0" width="19" height="20" fill="rgb(120, 120, 120)" fill-opacity="0.26"/></svg>
<div style="position:absolute;top:1951px;font-size:28px;line-height:28px;font-weight:400;color:#222;white-space:nowrap;letter-spacing:0.023px;left:2242px;"><span id="t84">*Ст</span></div>
<svg style="position:absolute;left:2285px;top:1954px" width="195" height="30" viewBox="0 0 195 30"><rect x="0" y="0" width="195" height="30" fill="#ffffff"/><rect x="0" y="0" width="20" height="20" fill="rgb(120, 120, 120)" fill-opacity="0.43"/><rect x="20" y="0" width="20" height="20" fill="rgb(120, 120, 120)" fill-opacity="0.43"/><rect x="40" y="0" width="20" height="20" fill="rgb(120, 120, 120)" fill-opacity="0.42"/><rect x="60" y="0" width="20" height="20" fill="rgb(120, 120, 120)" fill-opacity="0.18"/><rect x="80" y="0" width="20" height="20" fill="rgb(120, 120, 120)" fill-opacity="0.33"/><rect x="100" y="0" width="20" height="20" fill="rgb(120, 120, 120)" fill-opacity="0.28"/><rect x="120" y="0" width="20" height="20" fill="rgb(120, 120, 120)" fill-opacity="0.31"/><rect x="140" y="0" width="20" height="20" fill="rgb(120, 120, 120)" fill-opacity="0.19"/><rect x="160" y="0" width="20" height="20" fill="rgb(120, 120, 120)" fill-opacity="0.21"/><rect x="180" y="0" width="15" height="20" fill="rgb(120, 120, 120)" fill-opacity="0.28"/><rect x="0" y="20" width="20" height="10" fill="rgb(120, 120, 120)" fill-opacity="0.02"/><rect x="20" y="20" width="20" height="10" fill="rgb(120, 120, 120)" fill-opacity="0.05"/><rect x="40" y="20" width="20" height="10" fill="rgb(120, 120, 120)" fill-opacity="0.00"/><rect x="60" y="20" width="20" height="10" fill="rgb(120, 120, 120)" fill-opacity="0.01"/><rect x="80" y="20" width="20" height="10" fill="rgb(120, 120, 120)" fill-opacity="0.07"/><rect x="100" y="20" width="20" height="10" fill="rgb(120, 120, 120)" fill-opacity="0.04"/><rect x="120" y="20" width="20" height="10" fill="rgb(120, 120, 120)" fill-opacity="0.05"/><rect x="140" y="20" width="20" height="10" fill="rgb(120, 120, 120)" fill-opacity="0.07"/><rect x="160" y="20" width="20" height="10" fill="rgb(120, 120, 120)" fill-opacity="0.04"/><rect x="180" y="20" width="15" height="10" fill="rgb(120, 120, 120)" fill-opacity="0.01"/></svg>
<div style="position:absolute;top:2053.5px;font-size:28px;line-height:28px;font-weight:400;color:#222;white-space:nowrap;letter-spacing:-1.143px;left:2196px;"><span id="t85">*Заявка</span></div>
<svg style="position:absolute;left:2300px;top:2054px" width="238" height="40" viewBox="0 0 238 40"><rect x="0" y="0" width="238" height="40" fill="#fafafa"/><rect x="0" y="0" width="20" height="20" fill="rgb(120, 120, 120)" fill-opacity="0.31"/><rect x="20" y="0" width="20" height="20" fill="rgb(120, 120, 120)" fill-opacity="0.35"/><rect x="40" y="0" width="20" height="20" fill="rgb(120, 120, 120)" fill-opacity="0.15"/><rect x="60" y="0" width="20" height="20" fill="rgb(120, 120, 120)" fill-opacity="0.40"/><rect x="80" y="0" width="20" height="20" fill="rgb(120, 120, 120)" fill-opacity="0.16"/><rect x="100" y="0" width="20" height="20" fill="rgb(120, 120, 120)" fill-opacity="0.30"/><rect x="120" y="0" width="20" height="20" fill="rgb(120, 120, 120)" fill-opacity="0.13"/><rect x="140" y="0" width="20" height="20" fill="rgb(120, 120, 120)" fill-opacity="0.33"/><rect x="160" y="0" width="20" height="20" fill="rgb(120, 120, 120)" fill-opacity="0.15"/><rect x="180" y="0" width="20" height="20" fill="rgb(120, 120, 120)" fill-opacity="0.31"/><rect x="200" y="0" width="20" height="20" fill="rgb(120, 120, 120)" fill-opacity="0.32"/><rect x="220" y="0" width="18" height="20" fill="rgb(120, 120, 120)" fill-opacity="0.33"/><rect x="0" y="20" width="20" height="20" fill="rgb(120, 120, 120)" fill-opacity="0.06"/><rect x="20" y="20" width="20" height="20" fill="rgb(120, 120, 120)" fill-opacity="0.11"/><rect x="40" y="20" width="20" height="20" fill="rgb(120, 120, 120)" fill-opacity="0.12"/><rect x="60" y="20" width="20" height="20" fill="rgb(120, 120, 120)" fill-opacity="0.03"/><rect x="80" y="20" width="20" height="20" fill="rgb(120, 120, 120)" fill-opacity="0.07"/><rect x="100" y="20" width="20" height="20" fill="rgb(120, 120, 120)" fill-opacity="0.12"/><rect x="120" y="20" width="20" height="20" fill="rgb(120, 120, 120)" fill-opacity="0.09"/><rect x="140" y="20" width="20" height="20" fill="rgb(120, 120, 120)" fill-opacity="0.06"/><rect x="160" y="20" width="20" height="20" fill="rgb(120, 120, 120)" fill-opacity="0.05"/><rect x="180" y="20" width="20" height="20" fill="rgb(120, 120, 120)" fill-opacity="0.12"/><rect x="200" y="20" width="20" height="20" fill="rgb(120, 120, 120)" fill-opacity="0.03"/><rect x="220" y="20" width="18" height="20" fill="rgb(120, 120, 120)" fill-opacity="0.10"/></svg>
<div style="position:absolute;top:2154.5px;font-size:28px;line-height:28px;font-weight:400;color:#222;white-space:nowrap;letter-spacing:-0.695px;left:2196px;"><span id="t86">*За</span></div>
<svg style="position:absolute;left:2238px;top:2154px" width="290" height="20" viewBox="0 0 290 20"><rect x="0" y="0" width="290" height="20" fill="#ffffff"/><rect x="0" y="0" width="20" height="20" fill="rgb(120, 120, 120)" fill-opacity="0.21"/><rect x="20" y="0" width="20" height="20" fill="rgb(120, 120, 120)" fill-opacity="0.38"/><rect x="40" y="0" width="20" height="20" fill="rgb(120, 120, 120)" fill-opacity="0.35"/><rect x="60" y="0" width="20" height="20" fill="rgb(120, 120, 120)" fill-opacity="0.16"/><rect x="80" y="0" width="20" height="20" fill="rgb(120, 120, 120)" fill-opacity="0.36"/><rect x="100" y="0" width="20" height="20" fill="rgb(120, 120, 120)" fill-opacity="0.29"/><rect x="120" y="0" width="20" height="20" fill="rgb(120, 120, 120)" fill-opacity="0.11"/><rect x="140" y="0" width="20" height="20" fill="rgb(120, 120, 120)" fill-opacity="0.39"/><rect x="160" y="0" width="20" height="20" fill="rgb(120, 120, 120)" fill-opacity="0.18"/><rect x="180" y="0" width="20" height="20" fill="rgb(120, 120, 120)" fill-opacity="0.19"/><rect x="200" y="0" width="20" height="20" fill="rgb(120, 120, 120)" fill-opacity="0.23"/><rect x="220" y="0" width="20" height="20" fill="rgb(120, 120, 120)" fill-opacity="0.28"/><rect x="240" y="0" width="20" height="20" fill="rgb(120, 120, 120)" fill-opacity="0.14"/><rect x="260" y="0" width="20" height="20" fill="rgb(120, 120, 120)" fill-opacity="0.31"/><rect x="280" y="0" width="10" height="20" fill="rgb(120, 120, 120)" fill-opacity="0.35"/></svg>
<div style="position:absolute;top:1833.5px;font-size:28px;line-height:28px;font-weight:400;color:#222;white-space:nowrap;left:2658px;"><span id="t87">Е</span></div>
<div style="position:absolute;top:1833.5px;font-size:28px;line-height:28px;font-weight:400;color:#222;white-space:nowrap;left:-221px;width:3000px;text-align:right;"><span id="t88">а</span></div>
<div style="position:absolute;top:1866px;font-size:28px;line-height:28px;font-weight:400;color:#222;white-space:nowrap;left:2658px;"><span id="t89">А</span></div>
<div style="position:absolute;top:1866px;font-size:28px;line-height:28px;font-weight:400;color:#222;white-space:nowrap;left:-221px;width:3000px;text-align:right;"><span id="t90">а</span></div>
<svg style="position:absolute;left:2672px;top:1833px" width="103" height="60" viewBox="0 0 103 60"><rect x="0" y="0" width="103" height="60" fill="#fafafa"/><rect x="0" y="0" width="20" height="20" fill="rgb(120, 120, 120)" fill-opacity="0.15"/><rect x="20" y="0" width="20" height="20" fill="rgb(120, 120, 120)" fill-opacity="0.17"/><rect x="40" y="0" width="20" height="20" fill="rgb(120, 120, 120)" fill-opacity="0.21"/><rect x="60" y="0" width="20" height="20" fill="rgb(120, 120, 120)" fill-opacity="0.25"/><rect x="80" y="0" width="20" height="20" fill="rgb(120, 120, 120)" fill-opacity="0.17"/><rect x="100" y="0" width="3" height="20" fill="rgb(120, 120, 120)" fill-opacity="0.17"/><rect x="0" y="20" width="20" height="20" fill="rgb(120, 120, 120)" fill-opacity="0.07"/><rect x="20" y="20" width="20" height="20" fill="rgb(120, 120, 120)" fill-opacity="0.13"/><rect x="40" y="20" width="20" height="20" fill="rgb(120, 120, 120)" fill-opacity="0.06"/><rect x="60" y="20" width="20" height="20" fill="rgb(120, 120, 120)" fill-opacity="0.12"/><rect x="80" y="20" width="20" height="20" fill="rgb(120, 120, 120)" fill-opacity="0.12"/><rect x="100" y="20" width="3" height="20" fill="rgb(120, 120, 120)" fill-opacity="0.06"/><rect x="0" y="40" width="20" height="20" fill="rgb(120, 120, 120)" fill-opacity="0.43"/><rect x="20" y="40" width="20" height="20" fill="rgb(120, 120, 120)" fill-opacity="0.42"/><rect x="40" y="40" width="20" height="20" fill="rgb(120, 120, 120)" fill-opacity="0.41"/><rect x="60" y="40" width="20" height="20" fill="rgb(120, 120, 120)" fill-opacity="0.50"/><rect x="80" y="40" width="20" height="20" fill="rgb(120, 120, 120)" fill-opacity="0.36"/><rect x="100" y="40" width="3" height="20" fill="rgb(120, 120, 120)" fill-opacity="0.35"/></svg>
<div style="position:absolute;top:1935px;font-size:28px;line-height:28px;font-weight:400;color:#222;white-space:nowrap;left:2658px;"><span id="t91">Е</span></div>
<div style="position:absolute;top:1935px;font-size:28px;line-height:28px;font-weight:400;color:#222;white-space:nowrap;left:-221px;width:3000px;text-align:right;"><span id="t92">а</span></div>
<div style="position:absolute;top:1967.5px;font-size:28px;line-height:28px;font-weight:400;color:#222;white-space:nowrap;left:2658px;"><span id="t93">А</span></div>
<div style="position:absolute;top:1967.5px;font-size:28px;line-height:28px;font-weight:400;color:#222;white-space:nowrap;left:-221px;width:3000px;text-align:right;"><span id="t94">а</span></div>
<svg style="position:absolute;left:2668px;top:1940px" width="105" height="54" viewBox="0 0 105 54"><rect x="0" y="0" width="105" height="54" fill="#ffffff"/><rect x="0" y="0" width="20" height="14" fill="rgb(120, 120, 120)" fill-opacity="0.11"/><rect x="20" y="0" width="20" height="14" fill="rgb(120, 120, 120)" fill-opacity="0.13"/><rect x="40" y="0" width="20" height="14" fill="rgb(120, 120, 120)" fill-opacity="0.15"/><rect x="60" y="0" width="20" height="14" fill="rgb(120, 120, 120)" fill-opacity="0.24"/><rect x="80" y="0" width="20" height="14" fill="rgb(120, 120, 120)" fill-opacity="0.17"/><rect x="100" y="0" width="5" height="14" fill="rgb(120, 120, 120)" fill-opacity="0.21"/><rect x="0" y="14" width="20" height="20" fill="rgb(120, 120, 120)" fill-opacity="0.04"/><rect x="20" y="14" width="20" height="20" fill="rgb(120, 120, 120)" fill-opacity="0.08"/><rect x="40" y="14" width="20" height="20" fill="rgb(120, 120, 120)" fill-opacity="0.11"/><rect x="60" y="14" width="20" height="20" fill="rgb(120, 120, 120)" fill-opacity="0.08"/><rect x="80" y="14" width="20" height="20" fill="rgb(120, 120, 120)" fill-opacity="0.12"/><rect x="100" y="14" width="5" height="20" fill="rgb(120, 120, 120)" fill-opacity="0.11"/><rect x="0" y="34" width="20" height="20" fill="rgb(120, 120, 120)" fill-opacity="0.36"/><rect x="20" y="34" width="20" height="20" fill="rgb(120, 120, 120)" fill-opacity="0.30"/><rect x="40" y="34" width="20" height="20" fill="rgb(120, 120, 120)" fill-opacity="0.41"/><rect x="60" y="34" width="20" height="20" fill="rgb(120, 120, 120)" fill-opacity="0.32"/><rect x="80" y="34" width="20" height="20" fill="rgb(120, 120, 120)" fill-opacity="0.30"/><rect x="100" y="34" width="5" height="20" fill="rgb(120, 120, 120)" fill-opacity="0.41"/></svg>
<svg style="position:absolute;left:2660px;top:2038px" width="120" height="50" viewBox="0 0 120 50"><rect x="0" y="0" width="120" height="50" fill="#fafafa"/><rect x="0" y="0" width="20" height="15" fill="rgb(120, 120, 120)" fill-opacity="0.24"/><rect x="20" y="0" width="20" height="15" fill="rgb(120, 120, 120)" fill-opacity="0.24"/><rect x="40" y="0" width="20" height="15" fill="rgb(120, 120, 120)" fill-opacity="0.27"/><rect x="60" y="0" width="20" height="15" fill="rgb(120, 120, 120)" fill-opacity="0.19"/><rect x="80" y="0" width="20" height="15" fill="rgb(120, 120, 120)" fill-opacity="0.25"/><rect x="100" y="0" width="20" height="15" fill="rgb(120, 120, 120)" fill-opacity="0.28"/><rect x="0" y="15" width="20" height="15" fill="rgb(120, 120, 120)" fill-opacity="0.14"/><rect x="20" y="15" width="20" height="15" fill="rgb(120, 120, 120)" fill-opacity="0.07"/><rect x="40" y="15" width="20" height="15" fill="rgb(120, 120, 120)" fill-opacity="0.12"/><rect x="60" y="15" width="20" height="15" fill="rgb(120, 120, 120)" fill-opacity="0.11"/><rect x="80" y="15" width="20" height="15" fill="rgb(120, 120, 120)" fill-opacity="0.10"/><rect x="100" y="15" width="20" height="15" fill="rgb(120, 120, 120)" fill-opacity="0.15"/><rect x="0" y="30" width="20" height="20" fill="rgb(120, 120, 120)" fill-opacity="0.48"/><rect x="20" y="30" width="20" height="20" fill="rgb(120, 120, 120)" fill-opacity="0.47"/><rect x="40" y="30" width="20" height="20" fill="rgb(120, 120, 120)" fill-opacity="0.54"/><rect x="60" y="30" width="20" height="20" fill="rgb(120, 120, 120)" fill-opacity="0.50"/><rect x="80" y="30" width="20" height="20" fill="rgb(120, 120, 120)" fill-opacity="0.45"/><rect x="100" y="30" width="20" height="20" fill="rgb(120, 120, 120)" fill-opacity="0.45"/></svg>
<svg style="position:absolute;left:2660px;top:2137px" width="120" height="50" viewBox="0 0 120 50"><rect x="0" y="0" width="120" height="50" fill="#ffffff"/><rect x="0" y="0" width="20" height="15" fill="rgb(120, 120, 120)" fill-opacity="0.23"/><rect x="20" y="0" width="20" height="15" fill="rgb(120, 120, 120)" fill-opacity="0.24"/><rect x="40" y="0" width="20" height="15" fill="rgb(120, 120, 120)" fill-opacity="0.28"/><rect x="60" y="0" width="20" height="15" fill="rgb(120, 120, 120)" fill-opacity="0.28"/><rect x="80" y="0" width="20" height="15" fill="rgb(120, 120, 120)" fill-opacity="0.28"/><rect x="100" y="0" width="20" height="15" fill="rgb(120, 120, 120)" fill-opacity="0.20"/><rect x="0" y="15" width="20" height="15" fill="rgb(120, 120, 120)" fill-opacity="0.14"/><rect x="20" y="15" width="20" height="15" fill="rgb(120, 120, 120)" fill-opacity="0.09"/><rect x="40" y="15" width="20" height="15" fill="rgb(120, 120, 120)" fill-opacity="0.08"/><rect x="60" y="15" width="20" height="15" fill="rgb(120, 120, 120)" fill-opacity="0.06"/><rect x="80" y="15" width="20" height="15" fill="rgb(120, 120, 120)" fill-opacity="0.10"/><rect x="100" y="15" width="20" height="15" fill="rgb(120, 120, 120)" fill-opacity="0.07"/><rect x="0" y="30" width="20" height="20" fill="rgb(120, 120, 120)" fill-opacity="0.35"/><rect x="20" y="30" width="20" height="20" fill="rgb(120, 120, 120)" fill-opacity="0.42"/><rect x="40" y="30" width="20" height="20" fill="rgb(120, 120, 120)" fill-opacity="0.46"/><rect x="60" y="30" width="20" height="20" fill="rgb(120, 120, 120)" fill-opacity="0.45"/><rect x="80" y="30" width="20" height="20" fill="rgb(120, 120, 120)" fill-opacity="0.32"/><rect x="100" y="30" width="20" height="20" fill="rgb(120, 120, 120)" fill-opacity="0.31"/></svg>
<div style="position:absolute;top:1849.5px;font-size:28px;line-height:28px;font-weight:400;color:#222;white-space:nowrap;left:1506.5px;width:3000px;text-align:center;"><span id="t95">555</span></div>
<div style="position:absolute;top:1951px;font-size:28px;line-height:28px;font-weight:400;color:#222;white-space:nowrap;left:1506.5px;width:3000px;text-align:center;"><span id="t96">50</span></div>
<div style="position:absolute;top:2053.5px;font-size:28px;line-height:28px;font-weight:400;color:#222;white-space:nowrap;left:1506.5px;width:3000px;text-align:center;"><span id="t97">1</span></div>
<div style="position:absolute;top:2154.5px;font-size:28px;line-height:28px;font-weight:400;color:#222;white-space:nowrap;left:1506.5px;width:3000px;text-align:center;"><span id="t98">1</span></div>
<div style="position:absolute;left:611px;top:271px;width:399.5px;height:4px;background:#3e5f8e;"></div>
<div style="position:absolute;left:27px;top:381px;width:453.5px;height:144px;background:#fff;border-radius:4px;box-shadow:0 8px 22px rgba(0,0,0,0.13), 0 2px 5px rgba(0,0,0,0.05);"></div>
<div style="position:absolute;left:27px;top:389px;width:453.5px;height:64px;background:#effcfd;"></div>
<div style="position:absolute;left:27px;top:453px;width:453.5px;height:64px;background:#f4f4f4;"></div>
<div style="position:absolute;top:407.5px;font-size:28px;line-height:28px;font-weight:400;-webkit-text-stroke:0.9px #2a2a2a;color:#2a2a2a;white-space:nowrap;letter-spacing:1.181px;left:51px;"><span id="t99">Личные задания</span></div>
<svg style="position:absolute;left:426px;top:408px" width="34" height="28" viewBox="0 0 34 28"><polyline points="5,13.5 14.5,23 30,4" fill="none" stroke="#42a3c9" stroke-width="3" stroke-linecap="round" stroke-linejoin="round"/></svg>
<div style="position:absolute;top:471px;font-size:28px;line-height:28px;font-weight:400;color:#2a2a2a;white-space:nowrap;letter-spacing:0.861px;left:52px;"><span id="t100">По отделу (доступно тольк...</span></div>
<div style="position:absolute;left:318px;top:518.5px;width:507.5px;height:39.25px;background:#4f5256;border-radius:4px;box-shadow:0 4px 10px rgba(0,0,0,0.18);"></div>
<div style="position:absolute;top:526px;font-size:23px;line-height:23px;font-weight:400;-webkit-text-stroke:0.4px #f2f2f2;color:#f2f2f2;white-space:nowrap;letter-spacing:0.390px;left:331px;"><span id="t101">По отделу (доступно только руководителю)</span></div>
</body></html>
